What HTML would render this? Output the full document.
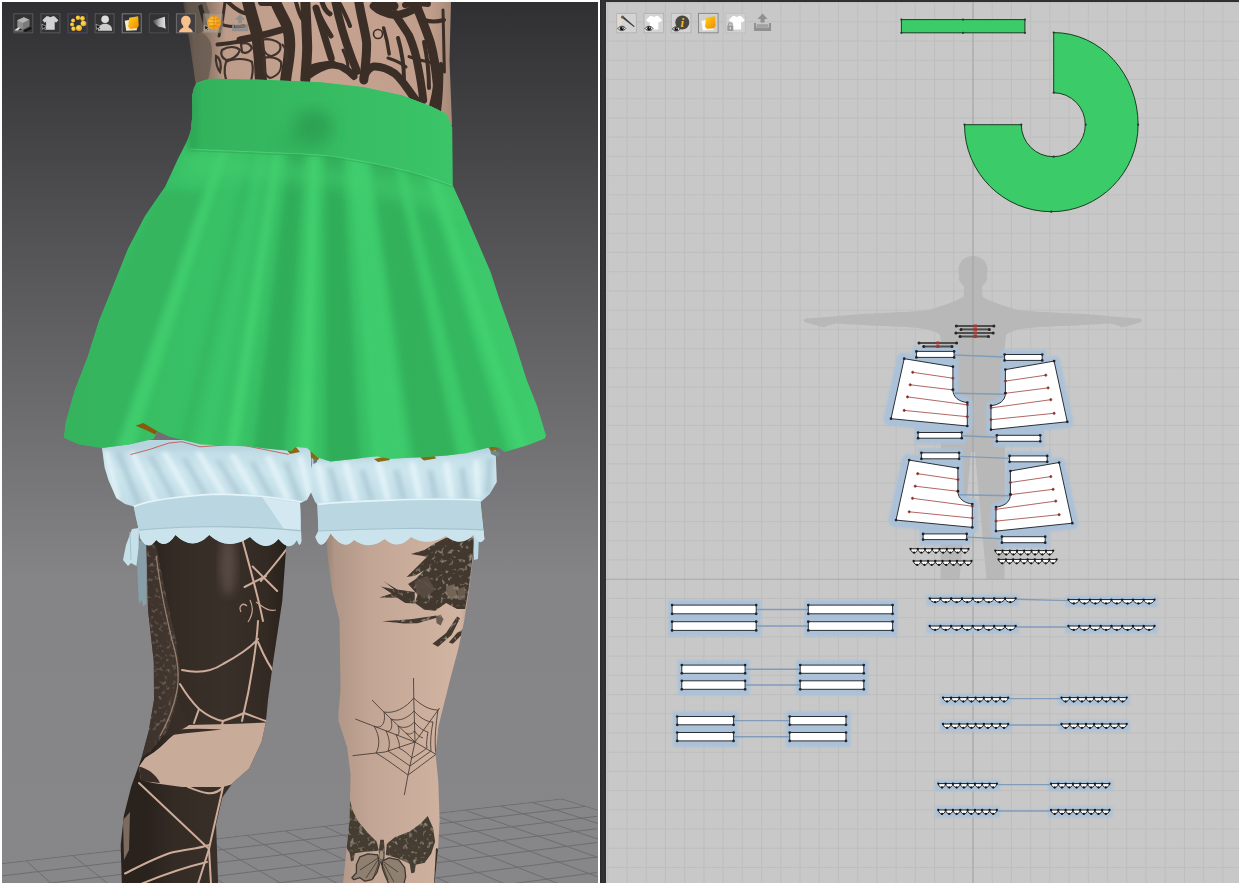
<!DOCTYPE html><html><head><meta charset="utf-8"><title>Garment</title>
<style>html,body{margin:0;padding:0;background:#fff;overflow:hidden}svg{display:block}text{font-family:"Liberation Serif",serif}</style></head><body>
<svg width="1239" height="883" viewBox="0 0 1239 883">
<defs><linearGradient id="bgL" x1="0" y1="2" x2="0" y2="883" gradientUnits="userSpaceOnUse"><stop offset="0" stop-color="#303032"/><stop offset="0.656" stop-color="#858587"/><stop offset="1" stop-color="#878789"/></linearGradient><clipPath id="clipL"><rect x="2" y="2" width="596" height="881"/></clipPath><clipPath id="clipF"><polygon points="2,863.1 561.6,798.4 598,809.7 598,883 2,883"/></clipPath><linearGradient id="torsoG" x1="183" y1="0" x2="452" y2="0" gradientUnits="userSpaceOnUse"><stop offset="0" stop-color="#4e443d"/><stop offset="0.07" stop-color="#7e6b5e"/><stop offset="0.16" stop-color="#bd9c8a"/><stop offset="0.5" stop-color="#c6a391"/><stop offset="0.92" stop-color="#c19e8c"/><stop offset="1" stop-color="#a58977"/></linearGradient><clipPath id="clipTorso"><path d="M183.3,2 L190,45 L196.6,90 L452,125 L449.5,60 L451,2 Z"/></clipPath><linearGradient id="dlegG" x1="146" y1="0" x2="288" y2="0" gradientUnits="userSpaceOnUse"><stop offset="0" stop-color="#2a221d"/><stop offset="0.2" stop-color="#342b25"/><stop offset="0.55" stop-color="#3a302a"/><stop offset="0.85" stop-color="#342a24"/><stop offset="1" stop-color="#27201b"/></linearGradient><clipPath id="clipDleg"><path d="M146,522 L148,610 L153.8,662 L154,700 L148.7,731 L141.5,758 L131.1,787 L123.8,816 L120.7,845 L121.8,884 L218.1,884 L217.1,853.4 L216.1,824.4 L222.3,797.4 L232.6,782.9 L249.2,768.4 L261.7,741.5 L265.8,722.8 L268,700 L273.1,662 L282.3,601 L288,522 Z"/></clipPath><linearGradient id="slegG" x1="326" y1="0" x2="474" y2="0" gradientUnits="userSpaceOnUse"><stop offset="0" stop-color="#9a8476"/><stop offset="0.06" stop-color="#b09687"/><stop offset="0.3" stop-color="#c2a594"/><stop offset="0.6" stop-color="#cbad9c"/><stop offset="0.9" stop-color="#d2b4a3"/><stop offset="1" stop-color="#b3998c"/></linearGradient><clipPath id="clipSleg"><path d="M325,522 L328,560 L332,590 L336,606 L339.5,620 L340.5,690 L338.5,712 L338.4,720.4 L347.2,747.6 L350.6,774.8 L349.5,820 L346.5,850 L343,884 L434.5,884 L438,850 L439.6,820 L438.3,781.6 L435.6,754.4 L438.3,727 L445,700 L451,676 L458,650 L464,622 L469,590 L474.5,545 L476,522 Z"/></clipPath><filter id="tex" x="0" y="0" width="100%" height="100%"><feTurbulence type="fractalNoise" baseFrequency="0.22" numOctaves="2" seed="3" result="n"/><feColorMatrix in="n" type="matrix" values="0 0 0 0 0.50  0 0 0 0 0.43  0 0 0 0 0.36  0 0 0 2.0 -1.15" result="nn"/><feComposite in="nn" in2="SourceGraphic" operator="in" result="m"/><feMerge><feMergeNode in="SourceGraphic"/><feMergeNode in="m"/></feMerge></filter><filter id="bl2" x="-10%" y="-10%" width="120%" height="120%"><feGaussianBlur stdDeviation="2.2"/></filter><filter id="bl1" x="-10%" y="-10%" width="120%" height="120%"><feGaussianBlur stdDeviation="1"/></filter><clipPath id="clipLB"><path d="M101,440 L102,448 L104.6,467.5 L108.4,480 L116.4,498.2 L125,504 L133.7,506.4 L136,518 L138.8,529.8 L140,538 Q148,552 156.2,540 Q165.4,550 175.5,535 Q192.9,552 209.2,535 Q228,552 250,537 Q266.3,554 278.5,539 Q289.5,553 297,540 Q299.5,549 301.5,541 L300,503 L307,500 L314.2,486 L311.2,465.6 L312,440 Z"/></clipPath><clipPath id="clipRB"><path d="M312.5,440 L312.2,463.5 L308,486 L315.3,502.3 L317.3,504.3 L318.4,530.8 L315.3,537 Q321,554 330.6,533.5 Q343.8,552 354,540 Q369.3,551 384.6,539 Q397.9,551 411.1,537 Q427,547 445.8,536 Q461,548 473.3,535 Q480,547 484.5,539 L483.9,534.5 L480.5,502.3 L489.6,494.1 L496.8,481.9 L495.8,455.4 L495,440 Z"/></clipPath><linearGradient id="puffG" x1="0" y1="440" x2="0" y2="510" gradientUnits="userSpaceOnUse"><stop offset="0" stop-color="#bcd8e3"/><stop offset="0.45" stop-color="#cde6ee"/><stop offset="1" stop-color="#c0dce6"/></linearGradient><clipPath id="clipSK"><path d="M190.8,130.7 L192.5,114 L192.3,95 L194,88 L196.6,83 L205,80 L213.6,78.7 L266.9,79.9 L320,82.3 L363.7,87.2 L402.4,95.6 L431.5,106.5 L446.4,114 L452.1,127.2 L452.5,185 L463.4,208.7 L477,240.4 L490.6,272.1 L499.7,300 L514,340 L526.7,380 L537,405.8 L546,435.5 L544.8,438.5 L530.4,444.2 L504.6,452 L499.4,447.5 L491.6,446.8 L465.8,453.3 L446.6,455.6 L420.8,457.2 L389.8,458.8 L376.9,456.2 L356.2,458.8 L330.4,461.4 L317.5,457.5 L307,447.7 L295.5,447 L291.7,451 L265.8,448.4 L250,446.5 L225,445.5 L200,444.2 L169,436.5 L157.5,431.3 L153.6,439.1 L130.4,444.2 L102,448 L78.7,444.2 L63.9,437.8 L65.8,422.3 L74.9,390 L87.5,357.4 L99,321 L113.5,285 L128,248.7 L145,216 L165,187 L177.2,160.6 L184,147 L188,138.8 Z"/></clipPath><filter id="bl5" x="-20%" y="-20%" width="140%" height="140%"><feGaussianBlur stdDeviation="5"/></filter><filter id="bl8" x="-20%" y="-20%" width="140%" height="140%"><feGaussianBlur stdDeviation="8"/></filter><linearGradient id="skG" x1="60" y1="0" x2="545" y2="0" gradientUnits="userSpaceOnUse"><stop offset="0" stop-color="#37bb62"/><stop offset="0.3" stop-color="#39c166"/><stop offset="0.7" stop-color="#39c166"/><stop offset="0.85" stop-color="#3cc86a"/><stop offset="1" stop-color="#3ecb6c"/></linearGradient><linearGradient id="wbG" x1="192" y1="0" x2="453" y2="0" gradientUnits="userSpaceOnUse"><stop offset="0" stop-color="#33b25c"/><stop offset="0.45" stop-color="#36ba61"/><stop offset="1" stop-color="#3bc468"/></linearGradient><filter id="bl3" x="-20%" y="-20%" width="140%" height="140%"><feGaussianBlur stdDeviation="3"/></filter><linearGradient id="orG" x1="0" y1="0" x2="1" y2="1"><stop offset="0" stop-color="#ffd21a"/><stop offset="1" stop-color="#f08a00"/></linearGradient><linearGradient id="gyG" x1="0" y1="0" x2="1" y2="0"><stop offset="0" stop-color="#3c3c3c"/><stop offset="0.6" stop-color="#bdbdbd"/><stop offset="1" stop-color="#e6e6e6"/></linearGradient><radialGradient id="ylG" cx="0.4" cy="0.4" r="0.7"><stop offset="0" stop-color="#ffe65a"/><stop offset="1" stop-color="#e89a10"/></radialGradient><linearGradient id="divg" x1="600" y1="0" x2="606" y2="0" gradientUnits="userSpaceOnUse"><stop offset="0" stop-color="#29292b"/><stop offset="0.5" stop-color="#343436"/><stop offset="1" stop-color="#2c2c2e"/></linearGradient><clipPath id="clipR"><rect x="606" y="2" width="633" height="881"/></clipPath><filter id="hb" x="-20%" y="-50%" width="140%" height="200%"><feGaussianBlur stdDeviation="1.1"/></filter></defs>
<rect x="0" y="0" width="1239" height="883" fill="#ffffff"/>
<rect x="2" y="2" width="596" height="881" fill="url(#bgL)"/>
<g clip-path="url(#clipF)" stroke="#6b6b6d" stroke-width="1" fill="none" opacity="0.9"><line x1="561.6" y1="798.9" x2="891.7" y2="900"/><line x1="531.9" y1="802.3" x2="836.6" y2="900"/><line x1="499.9" y1="806.0" x2="778.8" y2="900"/><line x1="465.0" y1="810.1" x2="717.4" y2="900"/><line x1="431.0" y1="814.0" x2="659.2" y2="900"/><line x1="395.0" y1="818.2" x2="599.2" y2="900"/><line x1="360.0" y1="822.2" x2="542.5" y2="900"/><line x1="324.0" y1="826.4" x2="485.7" y2="900"/><line x1="285.2" y1="830.9" x2="426.3" y2="900"/><line x1="246.5" y1="835.3" x2="368.6" y2="900"/><line x1="206.0" y1="840.0" x2="310.0" y2="900"/><line x1="163.0" y1="845.0" x2="249.7" y2="900"/><line x1="119.0" y1="850.1" x2="189.8" y2="900"/><line x1="72.6" y1="855.4" x2="128.6" y2="900"/><line x1="26.2" y1="860.8" x2="69.4" y2="900"/><line x1="-22.0" y1="866.4" x2="9.7" y2="900"/><line x1="-72.0" y1="872.2" x2="-50.1" y2="900"/><line x1="-124.0" y1="878.2" x2="-110.3" y2="900"/><line x1="-178.0" y1="884.4" x2="-170.7" y2="900"/><line x1="-235.0" y1="891.0" x2="-232.2" y2="900"/><line x1="-295.0" y1="897.9" x2="-294.7" y2="900"/><line x1="-360.0" y1="905.5" x2="-359.8" y2="900"/><line x1="-430.0" y1="913.5" x2="-427.2" y2="900"/><line x1="-505.0" y1="922.2" x2="-496.4" y2="900"/><line x1="2" y1="863.6" x2="597" y2="794.8"/><line x1="2" y1="875.9" x2="597" y2="805"/><line x1="2" y1="889" x2="597" y2="816.3"/><line x1="2" y1="903" x2="597" y2="828.7"/><line x1="2" y1="918" x2="597" y2="842.5"/><line x1="2" y1="934" x2="597" y2="857"/><line x1="2" y1="951" x2="597" y2="872.5"/><line x1="2" y1="969" x2="597" y2="889"/><line x1="2" y1="988" x2="597" y2="907"/></g>
<g clip-path="url(#clipL)"><path d="M183.3,2 L190,45 L196.6,90 L452,125 L449.5,60 L451,2 Z" fill="url(#torsoG)"/><g clip-path="url(#clipTorso)"><g stroke="#3a2e27" fill="none" stroke-linecap="round" stroke-linejoin="round"><path d="M247.7,0 C251,14 255,26 257.5,36 C259.5,52 260.5,66 261,82" stroke-width="12"/><path d="M217.5,44.5 C232,43 250,40 262,36" stroke-width="4"/><path d="M240,40 C255,37 268,34 281,30" stroke-width="7"/><path d="M275,0 C278,10 284,18 287,26 C291,38 290,48 289,56 C288,66 286,74 285.5,82" stroke-width="11"/><path d="M305.3,0 C306,20 307,36 307.2,48 C307,60 305.8,70 305.3,80" stroke-width="10"/><path d="M307,76 C315,70 322,66 332,64" stroke-width="8"/><path d="M317,10 C321,20 326,28 331,36" stroke-width="5"/><path d="M316,8 C321,24 326,42 331.2,58" stroke-width="7"/><path d="M335,0 C339,20 345,40 351,56 C353,62 355,66 356.7,71" stroke-width="8"/><path d="M358.5,0 C361,16 365,30 366.6,42 C367,56 365,68 363.8,80" stroke-width="9"/><path d="M310,68.5 C322,64 332,64 341,66.5 C346,69 350,72 354,76.5" stroke-width="7"/><path d="M363.8,77 C367,70 370,67 373.7,66.5 C381,66 388,69 395,73.6 C401,79 405,85 409,90.6 C412,95 415,99 418,103" stroke-width="8"/><path d="M373.7,6 C380,12 388,14 395,15 C403,15 411,11 417.5,7" stroke-width="8"/><path d="M376,4 L394,6" stroke-width="9"/><path d="M383.6,28 C386,36 388,45 389.2,54" stroke-width="3.5"/><path d="M395,14 C400,22 405,29 409,35.4 C413,45 416,54 417.5,63.7 C420,76 422,88 423.2,100" stroke-width="8"/><path d="M417.5,8.5 C422,20 427,32 430.3,42.5 C434,56 436,70 437.4,85 C437,93 435,100 433,108" stroke-width="9"/><path d="M443,10 L444.4,72" stroke-width="3"/><path d="M409,56.6 C418,60 428,62 437.4,63.7" stroke-width="3"/><path d="M424,20 C430,22 437,22 444,20" stroke-width="4"/><path d="M405,5 C412,3 420,3 428,4" stroke-width="6"/><path d="M340,4 C344,12 348,20 350,26" stroke-width="4"/><path d="M398,38 C402,52 404,64 404,80" stroke-width="4"/><path d="M388,58 C394,60 400,62 406,67" stroke-width="3"/><path d="M424,42 C427,56 429,70 429,88" stroke-width="4"/><path d="M441,64 C442,80 441,95 439,112" stroke-width="4"/><path d="M322,2 C324,8 326,12 330,14" stroke-width="5"/><path d="M296,2 C298,10 300,16 303,20" stroke-width="4"/><path d="M343,50 C346,56 348,62 348,68" stroke-width="3"/><path d="M262,2 L272,2" stroke-width="8"/><path d="M228,2 C236,10 244,14 250,14" stroke-width="4"/><path d="M214,20 C222,26 232,28 244,26" stroke-width="3"/><path d="M225,2 C224,12 222,24 219,36" stroke-width="3"/></g><g stroke="#3f332c" stroke-width="2.2" fill="none"><path d="M262,40 C268,38 276,40 280,44 C282,50 278,54 272,56 C266,56 262,50 262,40 Z"/><path d="M264,58 C270,56 278,58 281,62 C282,70 278,76 270,78 C265,76 263,68 264,58 Z"/><path d="M222,50 C228,46 236,46 240,50 C238,56 232,60 226,60 C222,58 220,54 222,50 Z"/><path d="M241,44 C246,42 250,44 252,48 C250,52 246,54 242,52 Z"/><path d="M226,62 C234,58 246,58 252,62 C254,70 252,78 250,84 L228,84 C224,76 224,68 226,62 Z"/><path d="M216,56 C220,58 222,64 220,72 C218,70 215,62 216,56 Z"/><path d="M282,44 C286,48 288,56 286,62"/></g><circle cx="378" cy="34" r="4.5" fill="#c6a391" stroke="#3a2e27" stroke-width="1.6"/><path d="M192,32 C200,30 210,36 211.5,46 C213,58 210,72 207,84 L196,84 Z" fill="#6a5d52" opacity="0.85"/><path d="M186,2 L206,2 L210,14 L206,30 L196,34 L190,30 Z" fill="#5f544b" opacity="0.8"/><path d="M198,6 L202,4 L208,26 L204,28 Z" fill="#2e2a28"/></g><path d="M146,522 L148,610 L153.8,662 L154,700 L148.7,731 L141.5,758 L131.1,787 L123.8,816 L120.7,845 L121.8,884 L218.1,884 L217.1,853.4 L216.1,824.4 L222.3,797.4 L232.6,782.9 L249.2,768.4 L261.7,741.5 L265.8,722.8 L268,700 L273.1,662 L282.3,601 L288,522 Z" fill="url(#dlegG)"/><g clip-path="url(#clipDleg)"><path d="M267,722.5 L230,724 L188,725 C178,730 170,738 165.8,742 C158,750 150,755 145,758 L139,766.6 L141,780 L153,783 L182,787 L223,787 L240,782 L252,768 L263,742 Z" fill="#c9ab9a"/><path d="M174,692 C180,704 186,716 188.5,725.5 C180,731 170,736 161,732 C166,722 170,708 174,692 Z" fill="#382d27"/><path d="M161.6,732 C180,728 200,728.5 222,729.5 C204,731.5 182,733 163,736.5 Z" fill="#382d27"/><path d="M139,766.6 C146,768 156,774 160,783 L141,781 Z" fill="#382d27"/><path d="M146,540 L156,545 L167,600 L176,640 L180,670 L177,700 L168,730 L150,752 L138,760 L140,700 L140,600 Z" fill="#4d4138" filter="url(#tex)" opacity="0.6"/><path d="M156.3,556 C160,590 166,615 172,640 C178,660 180,676 176.7,692 C174,706 168,722 160,736" stroke="#a58b79" stroke-width="1.3" fill="none" opacity="0.85"/><ellipse cx="228" cy="566" rx="8" ry="30" fill="#5b4e46" filter="url(#bl5)" opacity="0.9"/><g stroke="#cdac99" stroke-width="2" fill="none" stroke-linecap="round" stroke-linejoin="round"><path d="M182,670 C200,674 214,670 223,664 C238,656 250,648 258,639"/><path d="M258,621 C257,640 252,680 242,721"/><path d="M258,642 C264,656 270,668 277,676"/><path d="M180,684 C186,694 192,702 199,709 C208,716 216,720 223,721 C232,718 238,716 244,713 C252,716 260,719 266,721"/><path d="M199,709 L194,723"/><path d="M223,721 L222,725"/><path d="M242.5,540 C250,568 258,596 263,621"/><path d="M289,546 C280,558 270,570 260.9,581"/><path d="M252.7,566.5 L277.2,591"/><path d="M244.6,587 L266,576"/><path d="M139,783 L209,849"/><path d="M223,787 C218,810 213,830 209,849"/><path d="M188,787 C200,792 214,798 223,787"/><path d="M125,873.5 C140,866 155,858 170,853 C185,849 198,849 209,845"/><path d="M141,884 C165,874 190,866 207,862"/><path d="M209,849 L211,884"/><path d="M209,849 L198,884"/></g><g stroke="#c4a491" stroke-width="1.2" fill="none"><path d="M241,612 C238,606 243,602 247,606 M250,600 C254,608 252,616 248,622 M256,602 C262,606 268,612 276,610"/></g><path d="M123,820 L130,812 L129,850 L124,860 Z" fill="#7b6a5d"/></g><path d="M325,522 L328,560 L332,590 L336,606 L339.5,620 L340.5,690 L338.5,712 L338.4,720.4 L347.2,747.6 L350.6,774.8 L349.5,820 L346.5,850 L343,884 L434.5,884 L438,850 L439.6,820 L438.3,781.6 L435.6,754.4 L438.3,727 L445,700 L451,676 L458,650 L464,622 L469,590 L474.5,545 L476,522 Z" fill="url(#slegG)"/><g clip-path="url(#clipSleg)"><g filter="url(#tex)" fill="#43382f"><path d="M435.2,543.2 L446.1,537.7 L474.6,537.7 L471.9,562.2 L468.5,589.4 L465.1,609.1 L457.0,609.1 L446.1,603.0 L435.2,610.8 L424.4,609.7 L414.8,603.0 L417.6,594.8 L408.1,583.9 L414.8,579.8 L424.4,570.3 L414.8,575.8 L406.7,577.1 L417.6,566.3 L427.1,556.7 L410.8,554.0 L424.4,549.9 Z"/><path d="M414.8,592.1 L397.2,589.4 L383.6,581.2 L394.5,589.4 L380.9,586.6 L391.7,593.4 L379.5,597.5 L397.2,597.8 L405.3,603.0 L414.8,603.6 Z"/><path d="M382.2,621.3 L410.8,619.3 L436.6,615.5 L435.9,617.9 L417.6,623.3 L404.0,623.6 Z"/><path d="M435.9,616.5 L440.7,614.5 L443.4,619.3 L440.7,625.4 L436.6,623.3 Z" opacity="0.7"/><path d="M432.5,643.7 L446.1,632.9 L457.0,616.5 L460.0,618.2 L451.5,634.9 L438.0,646.7 Z"/><path d="M448.8,642.4 L457.0,632.9 L463.8,628.8 L461.1,635.6 L452.9,643.7 Z"/></g><path d="M446.1,586.6 L454.3,583.9 L457.0,594.8 L451.5,600.2 L446.1,594.8 Z" fill="#8a7868" opacity="0.7"/><path d="M457.0,589.4 L465.1,586.6 L465.1,598.9 L458.3,600.2 Z" fill="#7a6a5c" opacity="0.7"/><path d="M414.8,581.2 L427.1,575.8 L435.2,589.4 L424.4,598.9 L416.2,592.1 Z" fill="#5d5045" opacity="0.8"/><g stroke="#4b3f38" stroke-width="0.9" fill="none"><path d="M415,742 L379.8,708 L372,700"/><path d="M415,742 L413.8,700 L413.5,678"/><path d="M415,742 L439.6,708"/><path d="M415,742 L436,754.4"/><path d="M415,742 L408,775 L404.3,795"/><path d="M415,742 L385,752 L352.6,755.7"/><path d="M415,742 L355.3,719"/><path d="M384,712 C394,714 406,708 413.7,698 C422,706 430,710 438,710"/><path d="M391,719 C399,722 408,718 414,711 C420,718 427,722 433,722"/><path d="M398,726 C404,729 410,727 414.3,722 C419,728 424,731 428,732"/><path d="M406,733 C409,735 412,734 414.6,731 C417,735 420,737 423,738"/><path d="M384,712 C386,722 382,730 374,726"/><path d="M374,726 C380,736 380,746 376,753"/><path d="M376,753 C388,760 398,768 408,775"/><path d="M391,719 C393,727 391,733 386,731"/><path d="M386,731 C390,739 390,746 388,751"/><path d="M388,751 C396,756 404,762 410,766"/><path d="M398,726 C400,732 399,736 396,735 C399,741 400,745 399,748 C405,751 409,755 412,758"/><path d="M438,710 C436,724 434,740 436,754.4 C428,760 418,768 408,775"/><path d="M433,722 C431,732 430,742 431,751 C424,756 417,761 410,766"/><path d="M428,732 C427,738 426,744 427,748 C422,752 417,755 412,758"/></g><g filter="url(#tex)" fill="#453d33"><path d="M349.9,800.0 L352.4,809.9 L357.9,820.9 L367.9,832.9 L376.8,841.8 L378.8,850.8 L364.9,851.8 L354.9,853.3 L353.4,860.8 L350.9,861.3 L349.9,853.8 L346.0,846.8 L344.5,834.9 L346.0,819.9 L348.0,807.0 Z"/><path d="M427.7,815.9 L433.1,827.9 L435.1,841.8 L431.2,853.8 L424.7,862.8 L415.7,864.7 L414.7,872.7 L411.2,873.2 L409.7,863.8 L398.8,858.8 L385.8,854.8 L386.8,843.8 L394.8,837.3 L409.7,831.4 L420.7,823.4 Z"/><path d="M380.3,839.8 L383.8,839.8 L384.8,850.8 L384.3,860.8 L381.8,866.7 L379.3,860.8 L378.8,850.8 Z"/></g><g fill="#8f7f70" stroke="#40382f" stroke-width="1.3" stroke-linejoin="round"><path d="M377.8,854.8 L367.9,853.8 L359.9,856.8 L356.4,864.7 L356.4,872.7 L351.9,877.7 L353.9,879.7 L359.9,877.7 L364.9,881.2 L371.9,879.7 L376.8,872.7 L379.3,864.7 Z"/><path d="M382.8,860.8 L388.8,857.8 L398.8,859.8 L404.7,867.7 L405.7,876.7 L403.8,884 L388.8,884 L384.8,874.7 L382.3,867.7 Z"/></g><g stroke="#40382f" stroke-width="0.8" fill="none"><path d="M378,858 L360,870 M378,860 L366,878 M379,862 L373,879 M384,862 L398,872 M384,864 L394,882 M383,866 L388,880"/></g><ellipse cx="381.5" cy="855" rx="2" ry="4.5" fill="#a3917f"/><path d="M436,848 L440,850 L438,884 L434,884 Z" fill="#3b332b"/></g><path d="M137,541 L146,541 L146.5,604 L143,606 L141.5,600 L139,604 L137.5,575 Z" fill="#879fa9"/><path d="M132,529 L139,528 L138.5,548 L136.5,566 L131,563 L128,566 L123,560 L126,545 Z" fill="#c6e0ea"/><path d="M130,532 L131,560" stroke="#a5c3cf" stroke-width="1" fill="none"/><path d="M473.5,536 L479,536 L478,559 L474,560 Z" fill="#bedae5"/><path d="M101,440 L102,448 L104.6,467.5 L108.4,480 L116.4,498.2 L125,504 L133.7,506.4 L136,518 L138.8,529.8 L140,538 Q148,552 156.2,540 Q165.4,550 175.5,535 Q192.9,552 209.2,535 Q228,552 250,537 Q266.3,554 278.5,539 Q289.5,553 297,540 Q299.5,549 301.5,541 L300,503 L307,500 L314.2,486 L311.2,465.6 L312,440 Z" fill="url(#puffG)"/><path d="M312.5,440 L312.2,463.5 L308,486 L315.3,502.3 L317.3,504.3 L318.4,530.8 L315.3,537 Q321,554 330.6,533.5 Q343.8,552 354,540 Q369.3,551 384.6,539 Q397.9,551 411.1,537 Q427,547 445.8,536 Q461,548 473.3,535 Q480,547 484.5,539 L483.9,534.5 L480.5,502.3 L489.6,494.1 L496.8,481.9 L495.8,455.4 L495,440 Z" fill="url(#puffG)"/><g clip-path="url(#clipLB)"><g filter="url(#bl2)" opacity="0.75"><path d="M114.5,452 L136.5,506 L143.5,506 L121.5,452 Z" fill="#a9c6d2"/><path d="M129.0,452 L153.0,503 L159.0,503 L135.0,452 Z" fill="#eaf7fb"/><path d="M147.0,455 L171.0,499 L177.0,499 L153.0,455 Z" fill="#a9c6d2"/><path d="M160.5,452 L186.5,497 L193.5,497 L167.5,452 Z" fill="#eaf7fb"/><path d="M181.0,458 L203.0,496 L209.0,496 L187.0,458 Z" fill="#a9c6d2"/><path d="M194.5,452 L220.5,495 L227.5,495 L201.5,452 Z" fill="#eaf7fb"/><path d="M215.0,460 L237.0,496 L243.0,496 L221.0,460 Z" fill="#a9c6d2"/><path d="M228.5,454 L252.5,496 L259.5,496 L235.5,454 Z" fill="#eaf7fb"/><path d="M249.0,462 L269.0,498 L275.0,498 L255.0,462 Z" fill="#a9c6d2"/><path d="M264.5,456 L284.5,500 L291.5,500 L271.5,456 Z" fill="#eaf7fb"/><path d="M283.0,462 L297.0,502 L303.0,502 L289.0,462 Z" fill="#a9c6d2"/><path d="M297.0,456 L307.0,498 L313.0,498 L303.0,456 Z" fill="#eaf7fb"/><path d="M103.5,450 L115.5,500 L120.5,500 L108.5,450 Z" fill="#eaf7fb"/><path d="M100,440 L320,440 L320,449 L100,451 Z" fill="#b5d2dd"/></g><path d="M133.7,506.4 C150,500 176.6,496.2 217.3,494.1 C258,495 280,498 307,503 L301,531 C280,528 258,527.5 217,526.5 C180,527 160,528 138.8,530.5 Z" fill="#bad6e1"/><path d="M262,497 L301,503 L300,530 L284,529 Z" fill="#d3e8f0"/><path d="M133.7,506.4 C150,500 176.6,496.2 217.3,494.1 C258,495 280,498 307,503" stroke="#e4f3f8" stroke-width="1.6" fill="none"/><path d="M138.8,530.5 L140,538 Q148,552 156.2,540 Q165.4,550 175.5,535 Q192.9,552 209.2,535 Q228,552 250,537 Q266.3,554 278.5,539 Q289.5,553 297,540 Q299.5,549 301.5,541  L301,531 C280,528.5 258,528 217,527 C180,527.5 160,528.5 138.8,530.5 Z" fill="#cbe3ec"/><path d="M138.8,530.2 C160,528 180,527 217,526.5 C258,527.5 280,528 301,531" stroke="#a3c2ce" stroke-width="1.2" fill="none"/><path d="M130.4,454.6 L149.8,449.4 L169,443 L182,441.7 L200,446.8 L237.7,444.2 L288.7,454.4" stroke="#c24a44" stroke-width="0.8" fill="none"/></g><g clip-path="url(#clipRB)"><g filter="url(#bl2)" opacity="0.75"><path d="M315.0,464 L323.0,503 L329.0,503 L321.0,464 Z" fill="#eaf7fb"/><path d="M327.0,468 L337.0,503 L343.0,503 L333.0,468 Z" fill="#a9c6d2"/><path d="M341.5,462 L352.5,502 L359.5,502 L348.5,462 Z" fill="#eaf7fb"/><path d="M359.0,470 L369.0,501 L375.0,501 L365.0,470 Z" fill="#a9c6d2"/><path d="M374.5,462 L384.5,500 L391.5,500 L381.5,462 Z" fill="#eaf7fb"/><path d="M393.0,470 L401.0,500 L407.0,500 L399.0,470 Z" fill="#a9c6d2"/><path d="M408.5,462 L416.5,499 L423.5,499 L415.5,462 Z" fill="#eaf7fb"/><path d="M427.0,470 L433.0,499 L439.0,499 L433.0,470 Z" fill="#a9c6d2"/><path d="M442.5,462 L448.5,499 L455.5,499 L449.5,462 Z" fill="#eaf7fb"/><path d="M459.0,468 L463.0,499 L469.0,499 L465.0,468 Z" fill="#a9c6d2"/><path d="M473.0,460 L475.0,498 L481.0,498 L479.0,460 Z" fill="#eaf7fb"/><path d="M487.0,458 L485.0,494 L491.0,494 L493.0,458 Z" fill="#a9c6d2"/><path d="M308,440 L500,440 L500,452 L308,462 Z" fill="#b0cfda"/></g><path d="M317.3,504.3 C340,502 361.2,501.3 400,499.8 C437,499 460,499 480.5,500.3 L484,535 C460,529.5 437,528 400,528.5 C367,529 340,530 318.4,531 Z" fill="#bad6e1"/><path d="M317.3,504.3 C340,502 361.2,501.3 400,499.8 C437,499 460,499 480.5,500.3" stroke="#e4f3f8" stroke-width="1.6" fill="none"/><path d="M318.4,531 L315.3,537 Q321,554 330.6,533.5 Q343.8,552 354,540 Q369.3,551 384.6,539 Q397.9,551 411.1,537 Q427,547 445.8,536 Q461,548 473.3,535 Q480,547 484.5,539  L483.9,530 C460,529 437,528 400,528.5 C367,529 340,530 318.4,531 Z" fill="#cbe3ec"/><path d="M318.4,531 C340,530 367,529 400,528.5 C437,528 460,529 483.9,530" stroke="#a3c2ce" stroke-width="1.2" fill="none"/></g><path d="M313,452 L318,453 L317,462 L313.5,464 Z" fill="#65787f"/><path d="M490,449 L500,453 L498,457 L491,454 Z" fill="#6f848d"/><path d="M286,449 L296,447 L300,452 L290,454 Z" fill="#8a6a10"/><path d="M310,446 L322,453 L318,460 L311,458 Z" fill="#8a6a10"/><path d="M374,459 L388,456 L390,460 L378,462 Z" fill="#8a6a10"/><path d="M420,457.5 L434,455 L436,458.5 L424,460.5 Z" fill="#8a6a10"/><path d="M488,447 L497,445 L498,450 L491,451 Z" fill="#8a6a10"/><path d="M190.8,130.7 L192.5,114 L192.3,95 L194,88 L196.6,83 L205,80 L213.6,78.7 L266.9,79.9 L320,82.3 L363.7,87.2 L402.4,95.6 L431.5,106.5 L446.4,114 L452.1,127.2 L452.5,185 L463.4,208.7 L477,240.4 L490.6,272.1 L499.7,300 L514,340 L526.7,380 L537,405.8 L546,435.5 L544.8,438.5 L530.4,444.2 L504.6,452 L499.4,447.5 L491.6,446.8 L465.8,453.3 L446.6,455.6 L420.8,457.2 L389.8,458.8 L376.9,456.2 L356.2,458.8 L330.4,461.4 L317.5,457.5 L307,447.7 L295.5,447 L291.7,451 L265.8,448.4 L250,446.5 L225,445.5 L200,444.2 L169,436.5 L157.5,431.3 L153.6,439.1 L130.4,444.2 L102,448 L78.7,444.2 L63.9,437.8 L65.8,422.3 L74.9,390 L87.5,357.4 L99,321 L113.5,285 L128,248.7 L145,216 L165,187 L177.2,160.6 L184,147 L188,138.8 Z" fill="url(#skG)"/><g clip-path="url(#clipSK)"><g filter="url(#bl3)" opacity="0.78"><path d="M159.4,190 L23.7,475 L109.5,475 L206.4,190 Z" fill="#35b35d" opacity="1"/><path d="M219.0,150 L107.4,475 L125.4,475 L227.8,150 Z" fill="#42d070" opacity="1"/><path d="M250.3,150 L171.7,475 L182.7,475 L255.6,150 Z" fill="#33b35c" opacity="0.8"/><path d="M260.3,150 L192.4,475 L206.3,475 L267.1,150 Z" fill="#3cc86a" opacity="0.8"/><path d="M274.8,150 L222.2,475 L234.6,475 L280.8,150 Z" fill="#44d472" opacity="1"/><path d="M288.6,150 L250.5,475 L283.7,475 L304.7,150 Z" fill="#2fa856" opacity="1"/><path d="M311.1,150 L296.8,475 L312.1,475 L318.5,150 Z" fill="#44d472" opacity="1"/><path d="M324.8,150 L325.2,475 L361.1,475 L342.3,150 Z" fill="#2fa856" opacity="1"/><path d="M348.3,150 L373.6,475 L409.6,475 L365.8,150 Z" fill="#41cf6f" opacity="1"/><path d="M369.2,150 L416.5,475 L460.7,475 L390.7,150 Z" fill="#31ac59" opacity="1"/><path d="M394.0,150 L467.6,475 L478.7,475 L399.4,150 Z" fill="#3dca6b" opacity="1"/><path d="M400.7,150 L481.5,475 L514.7,475 L416.9,150 Z" fill="#33b25b" opacity="1"/><path d="M421.9,150 L525.0,475 L537.5,475 L428.0,150 Z" fill="#44d472" opacity="1"/></g><g filter="url(#bl8)"><path d="M192,150 L452,185 L460,215 L400,200 L330,185 L250,178 L180,180 Z" fill="#41cf6f" opacity="0.55"/></g><path d="M185,70 L460,70 L460,188 L452.5,185.5 C430,177 410,171 390,167 C360,160 340,157 320,155 C290,153 250,152 191,149 Z" fill="url(#wbG)"/><g filter="url(#bl8)"><ellipse cx="313" cy="127" rx="20" ry="17" fill="#2c9f51" opacity="0.95"/><ellipse cx="303" cy="142" rx="28" ry="9" fill="#2fa856" opacity="0.6"/></g><path d="M188,84 L198,84 L197,150 L186,150 Z" fill="#2fa555" filter="url(#bl3)" opacity="0.8"/><path d="M191,149 C250,152 290,153 320,155 C340,157 360,160 390,167 C410,171 430,177 452.5,185.5" stroke="#5fdc88" stroke-width="1" fill="none" opacity="0.5"/><path d="M191,150.6 C250,153.5 290,154.5 320,156.5 C340,158.5 360,161.5 390,168.5 C410,172.5 430,178.5 452.5,187" stroke="#2fa856" stroke-width="1.2" fill="none" opacity="0.6"/></g><path d="M135.6,425.8 L143.3,422.9 L157.5,431.3 L155,434.5 L146,430 Z" fill="#8a5a0c"/></g>
<g clip-path="url(#clipL)"><rect x="13.8" y="13.8" width="19" height="19" fill="none" stroke="#58585a" stroke-width="1" opacity="1"/><g transform="translate(13.3,13.3)"><path d="M4,7 L10.5,4 L16,6.5 L16,13 L9.5,16.5 L4,13.5 Z" fill="#8f8f8f"/><path d="M4,7 L10.5,4 L16,6.5 L9.5,9.8 Z" fill="#b4b4b4"/><path d="M9.5,9.8 L16,6.5 L16,13 L9.5,16.5 Z" fill="#7a7a7a"/><path d="M10,17.5 L17.5,14 L18.5,15.5 L12,18.5 Z" fill="#111"/><path d="M1,17 L5,14 L7,14.5 L4,18 Z" fill="#ddd"/><path d="M1,18.5 L10,18.5 L10,16.5 L1,17.5 Z" fill="#6c6c6c"/></g><rect x="40.9" y="13.8" width="19" height="19" fill="none" stroke="#58585a" stroke-width="1" opacity="1"/><path transform="translate(40.400000000000006,13.8) scale(1.0)" d="M6,2.5 L8,2.5 C8.6,3.6 11.4,3.6 12,2.5 L14,2.5 L18,6.5 L15.6,9 L14.3,7.8 L14.3,16 L5.7,16 L5.7,7.8 L4.4,9 L2,6.5 Z" fill="#d2d2d2"/><path d="M41.900000000000006,24.3 l5,2.2 l-2.2,0.6 l1.6,2 l-1,0.7 l-1.5,-2 l-1.4,1.6 Z" fill="#111" stroke="#eee" stroke-width="0.5"/><rect x="68.0" y="13.8" width="19" height="19" fill="none" stroke="#4a4a66" stroke-width="1" opacity="1"/><g><circle cx="78.0" cy="17.8" r="2.2" fill="url(#ylG)"/><circle cx="82.5" cy="18.5" r="2.4" fill="url(#ylG)"/><circle cx="83.5" cy="23.5" r="2.8" fill="url(#ylG)"/><circle cx="79.0" cy="28.1" r="3" fill="url(#ylG)"/><circle cx="73.5" cy="28.8" r="2.2" fill="url(#ylG)"/><circle cx="72.1" cy="24.5" r="2" fill="url(#ylG)"/><circle cx="73.1" cy="20.5" r="2" fill="url(#ylG)"/></g><rect x="95.1" y="13.8" width="19" height="19" fill="none" stroke="#58585a" stroke-width="1" opacity="1"/><g transform="translate(94.60000000000001,13.3)"><circle cx="10.5" cy="6" r="3.8" fill="#dedede"/><path d="M3.5,17.5 C3.5,12.5 6.5,10.5 10.5,10.5 C14.5,10.5 17.5,12.5 17.5,17.5 Z" fill="#cccccc"/></g><path d="M96.10000000000001,24.3 l5,2.2 l-2.2,0.6 l1.6,2 l-1,0.7 l-1.5,-2 l-1.4,1.6 Z" fill="#111" stroke="#eee" stroke-width="0.5"/><rect x="122.2" y="13.8" width="19" height="19" fill="none" stroke="#7b7b80" stroke-width="1" opacity="1"/><g transform="translate(121.7,13.3)"><path d="M3,7.5 L8,6.5 L9,15 L15.5,14.5 L15,17 L4.5,17.5 Z" fill="#f5e9cf"/><path d="M7.5,4.5 L16.5,3 L17,12.5 L15.5,15 L8,15.5 L6.5,13 Z" fill="url(#orG)"/></g><rect x="149.3" y="13.8" width="19" height="19" fill="none" stroke="#4c4c4e" stroke-width="1" opacity="1"/><g transform="translate(148.8,13.3)"><path d="M3.5,7.5 C8,6.5 13,4 16,3.5 C16.5,7 16,12 17,15.5 C14,13.5 11,14.5 9,13 C7,11.5 5,9.5 3.5,7.5 Z" fill="url(#gyG)"/></g><rect x="176.4" y="13.8" width="19" height="19" fill="#3f3f41" stroke="#6e6e70" stroke-width="1" opacity="1"/><g transform="translate(175.90000000000003,13.3)"><path d="M10,2.5 C13,2.5 14.8,4.8 14.8,7.5 C14.8,10 13.6,11.8 12.6,12.6 L12.8,14.5 C14.5,15.3 16.5,16 17,19 L3,19 C3.5,16 5.5,15.3 7.2,14.5 L7.4,12.6 C6.4,11.8 5.2,10 5.2,7.5 C5.2,4.8 7,2.5 10,2.5 Z" fill="#f7c08c"/></g><rect x="203.5" y="13.8" width="19" height="19" fill="#b9a692" stroke="#9a9080" stroke-width="1" opacity="0.55"/><g transform="translate(203.00000000000003,13.3)"><circle cx="11" cy="9.5" r="7" fill="#f2a01e"/><circle cx="9.5" cy="8" r="4" fill="#ffc63a" opacity="0.8"/><path d="M4.5,9.5 H17.5 M11,2.5 V16.5 M6,5 C9,7 13,7 16,5 M6,14 C9,12 13,12 16,14" stroke="#c87810" stroke-width="0.6" fill="none"/></g><path d="M204.50000000000003,25.3 l5,2.2 l-2.2,0.6 l1.6,2 l-1,0.7 l-1.5,-2 l-1.4,1.6 Z" fill="#111" stroke="#eee" stroke-width="0.5"/><g transform="translate(230.10000000000002,13.3)" fill="#8c8c8e" opacity="0.9"><path d="M10,1 L15,6.5 L12,6.5 L12,10 L8,10 L8,6.5 L5,6.5 Z"/><path d="M2,10.5 L4,10.5 L4,15 L16,15 L16,10.5 L18,10.5 L18,18 L2,18 Z"/><rect x="4.5" y="11.5" width="11" height="3" fill="#7a7a7c"/></g></g>
<rect x="600" y="0" width="639" height="2" fill="#303032"/>
<rect x="600" y="0" width="6" height="883" fill="url(#divg)"/>
<rect x="606" y="2" width="633" height="881" fill="#c8c8c8"/>
<g stroke="#bebebe" stroke-width="1" clip-path="url(#clipR)"><line x1="607.82" y1="2" x2="607.82" y2="883"/><line x1="627.04" y1="2" x2="627.04" y2="883"/><line x1="646.26" y1="2" x2="646.26" y2="883"/><line x1="665.48" y1="2" x2="665.48" y2="883"/><line x1="684.70" y1="2" x2="684.70" y2="883"/><line x1="703.92" y1="2" x2="703.92" y2="883"/><line x1="723.14" y1="2" x2="723.14" y2="883"/><line x1="742.36" y1="2" x2="742.36" y2="883"/><line x1="761.58" y1="2" x2="761.58" y2="883"/><line x1="780.80" y1="2" x2="780.80" y2="883"/><line x1="800.02" y1="2" x2="800.02" y2="883"/><line x1="819.24" y1="2" x2="819.24" y2="883"/><line x1="838.46" y1="2" x2="838.46" y2="883"/><line x1="857.68" y1="2" x2="857.68" y2="883"/><line x1="876.90" y1="2" x2="876.90" y2="883"/><line x1="896.12" y1="2" x2="896.12" y2="883"/><line x1="915.34" y1="2" x2="915.34" y2="883"/><line x1="934.56" y1="2" x2="934.56" y2="883"/><line x1="953.78" y1="2" x2="953.78" y2="883"/><line x1="992.22" y1="2" x2="992.22" y2="883"/><line x1="1011.44" y1="2" x2="1011.44" y2="883"/><line x1="1030.66" y1="2" x2="1030.66" y2="883"/><line x1="1049.88" y1="2" x2="1049.88" y2="883"/><line x1="1069.10" y1="2" x2="1069.10" y2="883"/><line x1="1088.32" y1="2" x2="1088.32" y2="883"/><line x1="1107.54" y1="2" x2="1107.54" y2="883"/><line x1="1126.76" y1="2" x2="1126.76" y2="883"/><line x1="1145.98" y1="2" x2="1145.98" y2="883"/><line x1="1165.20" y1="2" x2="1165.20" y2="883"/><line x1="1184.42" y1="2" x2="1184.42" y2="883"/><line x1="1203.64" y1="2" x2="1203.64" y2="883"/><line x1="1222.86" y1="2" x2="1222.86" y2="883"/><line x1="606" y1="2.60" x2="1239" y2="2.60"/><line x1="606" y1="21.82" x2="1239" y2="21.82"/><line x1="606" y1="41.04" x2="1239" y2="41.04"/><line x1="606" y1="60.26" x2="1239" y2="60.26"/><line x1="606" y1="79.48" x2="1239" y2="79.48"/><line x1="606" y1="98.70" x2="1239" y2="98.70"/><line x1="606" y1="117.92" x2="1239" y2="117.92"/><line x1="606" y1="137.14" x2="1239" y2="137.14"/><line x1="606" y1="156.36" x2="1239" y2="156.36"/><line x1="606" y1="175.58" x2="1239" y2="175.58"/><line x1="606" y1="194.80" x2="1239" y2="194.80"/><line x1="606" y1="214.02" x2="1239" y2="214.02"/><line x1="606" y1="233.24" x2="1239" y2="233.24"/><line x1="606" y1="252.46" x2="1239" y2="252.46"/><line x1="606" y1="271.68" x2="1239" y2="271.68"/><line x1="606" y1="290.90" x2="1239" y2="290.90"/><line x1="606" y1="310.12" x2="1239" y2="310.12"/><line x1="606" y1="329.34" x2="1239" y2="329.34"/><line x1="606" y1="348.56" x2="1239" y2="348.56"/><line x1="606" y1="367.78" x2="1239" y2="367.78"/><line x1="606" y1="387.00" x2="1239" y2="387.00"/><line x1="606" y1="406.22" x2="1239" y2="406.22"/><line x1="606" y1="425.44" x2="1239" y2="425.44"/><line x1="606" y1="444.66" x2="1239" y2="444.66"/><line x1="606" y1="463.88" x2="1239" y2="463.88"/><line x1="606" y1="483.10" x2="1239" y2="483.10"/><line x1="606" y1="502.32" x2="1239" y2="502.32"/><line x1="606" y1="521.54" x2="1239" y2="521.54"/><line x1="606" y1="540.76" x2="1239" y2="540.76"/><line x1="606" y1="559.98" x2="1239" y2="559.98"/><line x1="606" y1="598.42" x2="1239" y2="598.42"/><line x1="606" y1="617.64" x2="1239" y2="617.64"/><line x1="606" y1="636.86" x2="1239" y2="636.86"/><line x1="606" y1="656.08" x2="1239" y2="656.08"/><line x1="606" y1="675.30" x2="1239" y2="675.30"/><line x1="606" y1="694.52" x2="1239" y2="694.52"/><line x1="606" y1="713.74" x2="1239" y2="713.74"/><line x1="606" y1="732.96" x2="1239" y2="732.96"/><line x1="606" y1="752.18" x2="1239" y2="752.18"/><line x1="606" y1="771.40" x2="1239" y2="771.40"/><line x1="606" y1="790.62" x2="1239" y2="790.62"/><line x1="606" y1="809.84" x2="1239" y2="809.84"/><line x1="606" y1="829.06" x2="1239" y2="829.06"/><line x1="606" y1="848.28" x2="1239" y2="848.28"/><line x1="606" y1="867.50" x2="1239" y2="867.50"/></g>
<path d="M973,256 C981.5,256 987.5,262 987.5,270 C987.5,273 987,275 986.5,276.5 C987.5,277 987.5,280 986,281.5 C985,283.5 983.5,285 982,286 L982.5,297 C990,301 1003,306 1018,310 C1040,313 1080,312.5 1112,316.5 L1140,318.5 C1143,319.5 1143,321.5 1140,322.5 L1122,327.5 L1118,325.5 L1110,323.5 C1080,325.5 1050,326.5 1034,327.5 C1020,328.5 1010,331 1006,335 L1004,356 C1003,375 1000,390 1001,405 C1002,420 1005,432 1005,445 L1005,520 L1004.5,579 L986.5,579 L981,520 L975,452 L971,452 L965,520 L959.5,579 L940.5,579 L941,520 L941,445 C941,432 944,420 945,405 C946,390 943,375 942,356 L940,335 C936,331 926,328.5 912,327.5 C896,326.5 866,325.5 836,323.5 L828,325.5 L824,327.5 L806,322.5 C803,321.5 803,319.5 806,318.5 L834,316.5 C866,312.5 906,313 928,310 C943,306 956,301 963.5,297 L964,286 C962.5,285 961,283.5 960,281.5 C958.5,280 958.5,277 959.5,276.5 C959,275 958.5,273 958.5,270 C958.5,262 964.5,256 973,256 Z" fill="#b8b8b8"/>
<line x1="973.0" y1="2" x2="973.0" y2="883" stroke="#a2a2a2" stroke-width="1.1"/>
<line x1="606" y1="579.2" x2="1239" y2="579.2" stroke="#a8a8a8" stroke-width="1.1"/>
<rect x="901.4" y="19.6" width="123.5" height="13.2" fill="#3bcb68" stroke="#1d3b25" stroke-width="1"/>
<circle cx="901.4" cy="19.6" r="1.1" fill="#1d3b25"/><circle cx="963.0" cy="19.6" r="1.1" fill="#1d3b25"/><circle cx="1024.9" cy="19.6" r="1.1" fill="#1d3b25"/><circle cx="901.4" cy="32.8" r="1.1" fill="#1d3b25"/><circle cx="963.0" cy="32.8" r="1.1" fill="#1d3b25"/><circle cx="1024.9" cy="32.8" r="1.1" fill="#1d3b25"/>
<path d="M1053.7,32.6 C1100.3,32.6 1138.1,73.8 1138.1,124.7 C1138.1,172.8 1099.2,211.7 1051.3,211.7 C1003.4,211.7 964.5,172.8 964.5,124.7 L1021.3000000000001,124.7 A32.0,32.0 0 1 0 1053.7,92.7 Z" fill="#3bcb68" stroke="#1d3b25" stroke-width="1"/>
<circle cx="1053.7" cy="32.6" r="1.1" fill="#1d3b25"/><circle cx="1138.1" cy="124.7" r="1.1" fill="#1d3b25"/><circle cx="1051.3" cy="211.7" r="1.1" fill="#1d3b25"/><circle cx="964.5" cy="124.7" r="1.1" fill="#1d3b25"/><circle cx="1021.3" cy="124.7" r="1.1" fill="#1d3b25"/><circle cx="1053.7" cy="156.7" r="1.1" fill="#1d3b25"/><circle cx="1085.7" cy="124.7" r="1.1" fill="#1d3b25"/><circle cx="1053.7" cy="92.7" r="1.1" fill="#1d3b25"/>
<g fill="#a9c1d9" stroke="none" filter="url(#hb)" opacity="0.95"><rect x="912.9" y="346.9" width="45.2" height="16.0"/><rect x="1001.1" y="350.0" width="45.1" height="15.9"/><path d="M904.2,358.7 L952.9,366.7 L952.9,389.6 C952.9,397.6 959.3,401.6 967.3,402.6 L967.3,426.0 L891.0,418.7 Z" stroke="#a9c1d9" stroke-width="13" stroke-linejoin="round" transform="translate(-1,0.5)"/><path d="M1054.1,361.1 L1005.4,369.6 L1005.4,393.0 C1005.4,401.0 999.0,404.7 991.0,405.7 L991.0,429.7 L1067.3,421.8 Z" stroke="#a9c1d9" stroke-width="11" stroke-linejoin="round" transform="translate(0.5,0.5)"/><rect x="914.6" y="428.0" width="51.1" height="15.7"/><rect x="993.4" y="430.8" width="50.8" height="16.0"/><rect x="917.9" y="448.3" width="45.2" height="16.0"/><rect x="1006.1" y="451.4" width="45.1" height="15.9"/><path d="M909.2,460.1 L957.9,468.1 L957.9,491.0 C957.9,499.0 964.3,503.0 972.3,504.0 L972.3,527.4 L896.0,520.1 Z" stroke="#a9c1d9" stroke-width="13" stroke-linejoin="round" transform="translate(-1,0.5)"/><path d="M1059.1,462.5 L1010.4,471.0 L1010.4,494.4 C1010.4,502.4 1004.0,506.1 996.0,507.1 L996.0,531.1 L1072.3,523.2 Z" stroke="#a9c1d9" stroke-width="11" stroke-linejoin="round" transform="translate(0.5,0.5)"/><rect x="919.6" y="529.4" width="51.1" height="15.7"/><rect x="998.4" y="532.2" width="50.8" height="16.0"/><rect x="668.1" y="600.1" width="92.6" height="19.7"/><rect x="804.3" y="600.1" width="92.8" height="19.7"/><rect x="668.1" y="616.7" width="92.6" height="19.7"/><rect x="804.3" y="616.7" width="92.8" height="19.7"/><rect x="677.8" y="660.1" width="71.8" height="19.2"/><rect x="796.2" y="660.1" width="72.1" height="19.2"/><rect x="677.8" y="675.8" width="71.8" height="19.5"/><rect x="796.2" y="675.8" width="72.1" height="19.5"/><rect x="673.2" y="711.5" width="64.9" height="19.3"/><rect x="785.7" y="711.5" width="64.8" height="19.3"/><rect x="673.2" y="727.5" width="64.9" height="19.4"/><rect x="785.7" y="727.5" width="64.8" height="19.4"/><rect x="926.7" y="594.8" width="92.0" height="10.9"/><rect x="1065.4" y="596.1" width="92.1" height="10.9"/><rect x="926.7" y="622.5" width="92.0" height="10.9"/><rect x="1065.4" y="622.5" width="92.1" height="10.9"/><rect x="940.0" y="694.1" width="71.2" height="10.9"/><rect x="1058.5" y="694.1" width="71.2" height="10.9"/><rect x="940.0" y="720.5" width="71.2" height="10.9"/><rect x="1058.5" y="720.5" width="71.2" height="10.9"/><rect x="935.3" y="780.1" width="64.6" height="10.9"/><rect x="1048.0" y="780.1" width="64.5" height="10.9"/><rect x="935.3" y="806.5" width="64.6" height="10.9"/><rect x="1048.0" y="806.5" width="64.5" height="10.9"/></g>
<g stroke="#7f9dbb" stroke-width="1.4" fill="none"><line x1="954.1" y1="355.0" x2="1004.6" y2="357.0"/><line x1="954.6" y1="393.3" x2="1004.6" y2="394.3"/><line x1="961.7" y1="435.7" x2="996.9" y2="437.3"/><line x1="959.1" y1="456.4" x2="1009.6" y2="458.4"/><line x1="959.6" y1="494.7" x2="1009.6" y2="495.7"/><line x1="966.7" y1="537.1" x2="1001.9" y2="538.7"/><line x1="756.2" y1="609.5" x2="808.3" y2="609.5"/><line x1="756.2" y1="626.0" x2="808.3" y2="626.0"/><line x1="745.1" y1="669.2" x2="800.2" y2="669.2"/><line x1="745.1" y1="685.0" x2="800.2" y2="685.0"/><line x1="733.6" y1="720.6" x2="789.7" y2="720.6"/><line x1="733.6" y1="736.7" x2="789.7" y2="736.7"/><line x1="1015.7" y1="599.3" x2="1068.4" y2="600.6"/><line x1="1015.7" y1="627.0" x2="1068.4" y2="627.0"/><line x1="1008.2" y1="698.6" x2="1061.5" y2="698.6"/><line x1="1008.2" y1="725.0" x2="1061.5" y2="725.0"/><line x1="996.9" y1="784.6" x2="1051.0" y2="784.6"/><line x1="996.9" y1="811.0" x2="1051.0" y2="811.0"/></g>
<g fill="#ffffff" stroke="#2a2f36" stroke-width="1"><rect x="916.4" y="351.4" width="37.7" height="6.0"/><rect x="1004.6" y="354.5" width="37.6" height="5.9"/><path d="M904.2,358.7 L952.9,366.7 L952.9,389.6 C952.9,397.6 959.3,401.6 967.3,402.6 L967.3,426.0 L891.0,418.7 Z"/><path d="M1054.1,361.1 L1005.4,369.6 L1005.4,393.0 C1005.4,401.0 999.0,404.7 991.0,405.7 L991.0,429.7 L1067.3,421.8 Z"/><rect x="918.1" y="432.5" width="43.6" height="5.7"/><rect x="996.9" y="435.3" width="43.3" height="6.0"/><rect x="921.4" y="452.8" width="37.7" height="6.0"/><rect x="1009.6" y="455.9" width="37.6" height="5.9"/><path d="M909.2,460.1 L957.9,468.1 L957.9,491.0 C957.9,499.0 964.3,503.0 972.3,504.0 L972.3,527.4 L896.0,520.1 Z"/><path d="M1059.1,462.5 L1010.4,471.0 L1010.4,494.4 C1010.4,502.4 1004.0,506.1 996.0,507.1 L996.0,531.1 L1072.3,523.2 Z"/><rect x="923.1" y="533.9" width="43.6" height="5.7"/><rect x="1001.9" y="536.7" width="43.3" height="6.0"/><rect x="672.1" y="605.1" width="84.1" height="8.7"/><rect x="808.3" y="605.1" width="84.3" height="8.7"/><rect x="672.1" y="621.7" width="84.1" height="8.7"/><rect x="808.3" y="621.7" width="84.3" height="8.7"/><rect x="681.8" y="665.1" width="63.3" height="8.2"/><rect x="800.2" y="665.1" width="63.6" height="8.2"/><rect x="681.8" y="680.8" width="63.3" height="8.5"/><rect x="800.2" y="680.8" width="63.6" height="8.5"/><rect x="677.2" y="716.5" width="56.4" height="8.3"/><rect x="789.7" y="716.5" width="56.3" height="8.3"/><rect x="677.2" y="732.5" width="56.4" height="8.4"/><rect x="789.7" y="732.5" width="56.3" height="8.4"/></g>
<g stroke="#9c403b" stroke-width="0.8" fill="#6e2a27"><line x1="912.7" y1="372.3" x2="952.9" y2="378.2"/><circle cx="912.7" cy="372.3" r="1.1"/><circle cx="952.9" cy="378.2" r="1.1"/><line x1="910.2" y1="384.8" x2="952.9" y2="389.9"/><circle cx="910.2" cy="384.8" r="1.1"/><circle cx="952.9" cy="389.9" r="1.1"/><line x1="907.5" y1="396.9" x2="967.3" y2="404.8"/><circle cx="907.5" cy="396.9" r="1.1"/><circle cx="967.3" cy="404.8" r="1.1"/><line x1="904.2" y1="410.4" x2="967.3" y2="416.7"/><circle cx="904.2" cy="410.4" r="1.1"/><circle cx="967.3" cy="416.7" r="1.1"/><line x1="1005.4" y1="381.1" x2="1045.8" y2="375.2"/><circle cx="1005.4" cy="381.1" r="1.1"/><circle cx="1045.8" cy="375.2" r="1.1"/><line x1="1005.4" y1="393.3" x2="1048.1" y2="387.9"/><circle cx="1005.4" cy="393.3" r="1.1"/><circle cx="1048.1" cy="387.9" r="1.1"/><line x1="991.0" y1="407.9" x2="1050.8" y2="399.7"/><circle cx="991.0" cy="407.9" r="1.1"/><circle cx="1050.8" cy="399.7" r="1.1"/><line x1="991.0" y1="419.7" x2="1054.1" y2="413.3"/><circle cx="991.0" cy="419.7" r="1.1"/><circle cx="1054.1" cy="413.3" r="1.1"/><line x1="917.7" y1="473.7" x2="957.9" y2="479.6"/><circle cx="917.7" cy="473.7" r="1.1"/><circle cx="957.9" cy="479.6" r="1.1"/><line x1="915.2" y1="486.2" x2="957.9" y2="491.3"/><circle cx="915.2" cy="486.2" r="1.1"/><circle cx="957.9" cy="491.3" r="1.1"/><line x1="912.5" y1="498.3" x2="972.3" y2="506.2"/><circle cx="912.5" cy="498.3" r="1.1"/><circle cx="972.3" cy="506.2" r="1.1"/><line x1="909.2" y1="511.8" x2="972.3" y2="518.1"/><circle cx="909.2" cy="511.8" r="1.1"/><circle cx="972.3" cy="518.1" r="1.1"/><line x1="1010.4" y1="482.5" x2="1050.8" y2="476.6"/><circle cx="1010.4" cy="482.5" r="1.1"/><circle cx="1050.8" cy="476.6" r="1.1"/><line x1="1010.4" y1="494.7" x2="1053.1" y2="489.3"/><circle cx="1010.4" cy="494.7" r="1.1"/><circle cx="1053.1" cy="489.3" r="1.1"/><line x1="996.0" y1="509.3" x2="1055.8" y2="501.1"/><circle cx="996.0" cy="509.3" r="1.1"/><circle cx="1055.8" cy="501.1" r="1.1"/><line x1="996.0" y1="521.1" x2="1059.1" y2="514.7"/><circle cx="996.0" cy="521.1" r="1.1"/><circle cx="1059.1" cy="514.7" r="1.1"/></g>
<circle cx="916.4" cy="351.4" r="1.35" fill="#20242a"/><circle cx="954.1" cy="351.4" r="1.35" fill="#20242a"/><circle cx="916.4" cy="357.4" r="1.35" fill="#20242a"/><circle cx="954.1" cy="357.4" r="1.35" fill="#20242a"/><circle cx="1004.6" cy="354.5" r="1.35" fill="#20242a"/><circle cx="1042.2" cy="354.5" r="1.35" fill="#20242a"/><circle cx="1004.6" cy="360.4" r="1.35" fill="#20242a"/><circle cx="1042.2" cy="360.4" r="1.35" fill="#20242a"/><circle cx="904.2" cy="358.7" r="1.35" fill="#20242a"/><circle cx="952.9" cy="366.7" r="1.35" fill="#20242a"/><circle cx="952.9" cy="389.6" r="1.35" fill="#20242a"/><circle cx="967.3" cy="402.6" r="1.35" fill="#20242a"/><circle cx="967.3" cy="426.0" r="1.35" fill="#20242a"/><circle cx="891.0" cy="418.7" r="1.35" fill="#20242a"/><circle cx="1054.1" cy="361.1" r="1.35" fill="#20242a"/><circle cx="1005.4" cy="369.6" r="1.35" fill="#20242a"/><circle cx="1005.4" cy="393.0" r="1.35" fill="#20242a"/><circle cx="991.0" cy="405.7" r="1.35" fill="#20242a"/><circle cx="991.0" cy="429.7" r="1.35" fill="#20242a"/><circle cx="1067.3" cy="421.8" r="1.35" fill="#20242a"/><circle cx="918.1" cy="432.5" r="1.35" fill="#20242a"/><circle cx="961.7" cy="432.5" r="1.35" fill="#20242a"/><circle cx="918.1" cy="438.2" r="1.35" fill="#20242a"/><circle cx="961.7" cy="438.2" r="1.35" fill="#20242a"/><circle cx="996.9" cy="435.3" r="1.35" fill="#20242a"/><circle cx="1040.2" cy="435.3" r="1.35" fill="#20242a"/><circle cx="996.9" cy="441.3" r="1.35" fill="#20242a"/><circle cx="1040.2" cy="441.3" r="1.35" fill="#20242a"/><circle cx="921.4" cy="452.8" r="1.35" fill="#20242a"/><circle cx="959.1" cy="452.8" r="1.35" fill="#20242a"/><circle cx="921.4" cy="458.8" r="1.35" fill="#20242a"/><circle cx="959.1" cy="458.8" r="1.35" fill="#20242a"/><circle cx="1009.6" cy="455.9" r="1.35" fill="#20242a"/><circle cx="1047.2" cy="455.9" r="1.35" fill="#20242a"/><circle cx="1009.6" cy="461.8" r="1.35" fill="#20242a"/><circle cx="1047.2" cy="461.8" r="1.35" fill="#20242a"/><circle cx="909.2" cy="460.1" r="1.35" fill="#20242a"/><circle cx="957.9" cy="468.1" r="1.35" fill="#20242a"/><circle cx="957.9" cy="491.0" r="1.35" fill="#20242a"/><circle cx="972.3" cy="504.0" r="1.35" fill="#20242a"/><circle cx="972.3" cy="527.4" r="1.35" fill="#20242a"/><circle cx="896.0" cy="520.1" r="1.35" fill="#20242a"/><circle cx="1059.1" cy="462.5" r="1.35" fill="#20242a"/><circle cx="1010.4" cy="471.0" r="1.35" fill="#20242a"/><circle cx="1010.4" cy="494.4" r="1.35" fill="#20242a"/><circle cx="996.0" cy="507.1" r="1.35" fill="#20242a"/><circle cx="996.0" cy="531.1" r="1.35" fill="#20242a"/><circle cx="1072.3" cy="523.2" r="1.35" fill="#20242a"/><circle cx="923.1" cy="533.9" r="1.35" fill="#20242a"/><circle cx="966.7" cy="533.9" r="1.35" fill="#20242a"/><circle cx="923.1" cy="539.6" r="1.35" fill="#20242a"/><circle cx="966.7" cy="539.6" r="1.35" fill="#20242a"/><circle cx="1001.9" cy="536.7" r="1.35" fill="#20242a"/><circle cx="1045.2" cy="536.7" r="1.35" fill="#20242a"/><circle cx="1001.9" cy="542.7" r="1.35" fill="#20242a"/><circle cx="1045.2" cy="542.7" r="1.35" fill="#20242a"/><circle cx="672.1" cy="605.1" r="1.35" fill="#20242a"/><circle cx="756.2" cy="605.1" r="1.35" fill="#20242a"/><circle cx="672.1" cy="613.8" r="1.35" fill="#20242a"/><circle cx="756.2" cy="613.8" r="1.35" fill="#20242a"/><circle cx="808.3" cy="605.1" r="1.35" fill="#20242a"/><circle cx="892.6" cy="605.1" r="1.35" fill="#20242a"/><circle cx="808.3" cy="613.8" r="1.35" fill="#20242a"/><circle cx="892.6" cy="613.8" r="1.35" fill="#20242a"/><circle cx="672.1" cy="621.7" r="1.35" fill="#20242a"/><circle cx="756.2" cy="621.7" r="1.35" fill="#20242a"/><circle cx="672.1" cy="630.4" r="1.35" fill="#20242a"/><circle cx="756.2" cy="630.4" r="1.35" fill="#20242a"/><circle cx="808.3" cy="621.7" r="1.35" fill="#20242a"/><circle cx="892.6" cy="621.7" r="1.35" fill="#20242a"/><circle cx="808.3" cy="630.4" r="1.35" fill="#20242a"/><circle cx="892.6" cy="630.4" r="1.35" fill="#20242a"/><circle cx="681.8" cy="665.1" r="1.35" fill="#20242a"/><circle cx="745.1" cy="665.1" r="1.35" fill="#20242a"/><circle cx="681.8" cy="673.3" r="1.35" fill="#20242a"/><circle cx="745.1" cy="673.3" r="1.35" fill="#20242a"/><circle cx="800.2" cy="665.1" r="1.35" fill="#20242a"/><circle cx="863.8" cy="665.1" r="1.35" fill="#20242a"/><circle cx="800.2" cy="673.3" r="1.35" fill="#20242a"/><circle cx="863.8" cy="673.3" r="1.35" fill="#20242a"/><circle cx="681.8" cy="680.8" r="1.35" fill="#20242a"/><circle cx="745.1" cy="680.8" r="1.35" fill="#20242a"/><circle cx="681.8" cy="689.3" r="1.35" fill="#20242a"/><circle cx="745.1" cy="689.3" r="1.35" fill="#20242a"/><circle cx="800.2" cy="680.8" r="1.35" fill="#20242a"/><circle cx="863.8" cy="680.8" r="1.35" fill="#20242a"/><circle cx="800.2" cy="689.3" r="1.35" fill="#20242a"/><circle cx="863.8" cy="689.3" r="1.35" fill="#20242a"/><circle cx="677.2" cy="716.5" r="1.35" fill="#20242a"/><circle cx="733.6" cy="716.5" r="1.35" fill="#20242a"/><circle cx="677.2" cy="724.8" r="1.35" fill="#20242a"/><circle cx="733.6" cy="724.8" r="1.35" fill="#20242a"/><circle cx="789.7" cy="716.5" r="1.35" fill="#20242a"/><circle cx="846.0" cy="716.5" r="1.35" fill="#20242a"/><circle cx="789.7" cy="724.8" r="1.35" fill="#20242a"/><circle cx="846.0" cy="724.8" r="1.35" fill="#20242a"/><circle cx="677.2" cy="732.5" r="1.35" fill="#20242a"/><circle cx="733.6" cy="732.5" r="1.35" fill="#20242a"/><circle cx="677.2" cy="740.9" r="1.35" fill="#20242a"/><circle cx="733.6" cy="740.9" r="1.35" fill="#20242a"/><circle cx="789.7" cy="732.5" r="1.35" fill="#20242a"/><circle cx="846.0" cy="732.5" r="1.35" fill="#20242a"/><circle cx="789.7" cy="740.9" r="1.35" fill="#20242a"/><circle cx="846.0" cy="740.9" r="1.35" fill="#20242a"/>
<g fill="#ffffff" stroke="#1c1c1c" stroke-width="1" stroke-linejoin="round"><path d="M910.5,548.8 C911.2,554.0 917.0,554.0 917.8,548.8 C918.5,554.0 924.3,554.0 925.0,548.8 C925.7,554.0 931.5,554.0 932.2,548.8 C933.0,554.0 938.8,554.0 939.5,548.8 C940.2,554.0 946.0,554.0 946.8,548.8 C947.5,554.0 953.3,554.0 954.0,548.8 C954.7,554.0 960.5,554.0 961.2,548.8 C962.0,554.0 967.8,554.0 968.5,548.8 Z"/><path d="M913.6,561.0 C914.3,566.2 920.1,566.2 920.8,561.0 C921.6,566.2 927.4,566.2 928.1,561.0 C928.8,566.2 934.6,566.2 935.3,561.0 C936.0,566.2 941.8,566.2 942.5,561.0 C943.3,566.2 949.1,566.2 949.8,561.0 C950.5,566.2 956.3,566.2 957.0,561.0 C957.7,566.2 963.5,566.2 964.3,561.0 C965.0,566.2 970.8,566.2 971.5,561.0 Z"/><path d="M995.3,550.6 C996.0,555.8 1001.8,555.8 1002.5,550.6 C1003.3,555.8 1009.1,555.8 1009.8,550.6 C1010.5,555.8 1016.3,555.8 1017.0,550.6 C1017.7,555.8 1023.5,555.8 1024.2,550.6 C1025.0,555.8 1030.8,555.8 1031.5,550.6 C1032.2,555.8 1038.0,555.8 1038.7,550.6 C1039.4,555.8 1045.2,555.8 1046.0,550.6 C1046.7,555.8 1052.5,555.8 1053.2,550.6 Z"/><path d="M998.6,559.4 C999.3,564.6 1005.1,564.6 1005.9,559.4 C1006.6,564.6 1012.4,564.6 1013.1,559.4 C1013.8,564.6 1019.6,564.6 1020.4,559.4 C1021.1,564.6 1026.9,564.6 1027.6,559.4 C1028.3,564.6 1034.1,564.6 1034.8,559.4 C1035.6,564.6 1041.4,564.6 1042.1,559.4 C1042.8,564.6 1048.6,564.6 1049.3,559.4 C1050.1,564.6 1055.9,564.6 1056.6,559.4 Z"/><path d="M929.7,598.3 C930.8,603.5 939.4,603.5 940.5,598.3 C941.5,603.5 950.1,603.5 951.2,598.3 C952.3,603.5 960.9,603.5 962.0,598.3 C963.0,603.5 971.6,603.5 972.7,598.3 C973.8,603.5 982.4,603.5 983.5,598.3 C984.5,603.5 993.1,603.5 994.2,598.3 C995.3,603.5 1003.9,603.5 1005.0,598.3 C1006.0,603.5 1014.6,603.5 1015.7,598.3 Z"/><path d="M1068.4,599.6 C1069.5,604.8 1078.1,604.8 1079.2,599.6 C1080.2,604.8 1088.8,604.8 1089.9,599.6 C1091.0,604.8 1099.6,604.8 1100.7,599.6 C1101.8,604.8 1110.4,604.8 1111.5,599.6 C1112.5,604.8 1121.1,604.8 1122.2,599.6 C1123.3,604.8 1131.9,604.8 1133.0,599.6 C1134.1,604.8 1142.7,604.8 1143.7,599.6 C1144.8,604.8 1153.4,604.8 1154.5,599.6 Z"/><path d="M929.7,626.0 C930.8,631.2 939.4,631.2 940.5,626.0 C941.5,631.2 950.1,631.2 951.2,626.0 C952.3,631.2 960.9,631.2 962.0,626.0 C963.0,631.2 971.6,631.2 972.7,626.0 C973.8,631.2 982.4,631.2 983.5,626.0 C984.5,631.2 993.1,631.2 994.2,626.0 C995.3,631.2 1003.9,631.2 1005.0,626.0 C1006.0,631.2 1014.6,631.2 1015.7,626.0 Z"/><path d="M1068.4,626.0 C1069.5,631.2 1078.1,631.2 1079.2,626.0 C1080.2,631.2 1088.8,631.2 1089.9,626.0 C1091.0,631.2 1099.6,631.2 1100.7,626.0 C1101.8,631.2 1110.4,631.2 1111.5,626.0 C1112.5,631.2 1121.1,631.2 1122.2,626.0 C1123.3,631.2 1131.9,631.2 1133.0,626.0 C1134.1,631.2 1142.7,631.2 1143.7,626.0 C1144.8,631.2 1153.4,631.2 1154.5,626.0 Z"/><path d="M943.0,697.6 C943.8,702.8 950.3,702.8 951.1,697.6 C952.0,702.8 958.5,702.8 959.3,697.6 C960.1,702.8 966.6,702.8 967.4,697.6 C968.3,702.8 974.8,702.8 975.6,697.6 C976.4,702.8 982.9,702.8 983.8,697.6 C984.6,702.8 991.1,702.8 991.9,697.6 C992.7,702.8 999.2,702.8 1000.1,697.6 C1000.9,702.8 1007.4,702.8 1008.2,697.6 Z"/><path d="M1061.5,697.6 C1062.3,702.8 1068.8,702.8 1069.7,697.6 C1070.5,702.8 1077.0,702.8 1077.8,697.6 C1078.6,702.8 1085.1,702.8 1086.0,697.6 C1086.8,702.8 1093.3,702.8 1094.1,697.6 C1094.9,702.8 1101.4,702.8 1102.2,697.6 C1103.1,702.8 1109.6,702.8 1110.4,697.6 C1111.2,702.8 1117.7,702.8 1118.6,697.6 C1119.4,702.8 1125.9,702.8 1126.7,697.6 Z"/><path d="M943.0,724.0 C943.8,729.2 950.3,729.2 951.1,724.0 C952.0,729.2 958.5,729.2 959.3,724.0 C960.1,729.2 966.6,729.2 967.4,724.0 C968.3,729.2 974.8,729.2 975.6,724.0 C976.4,729.2 982.9,729.2 983.8,724.0 C984.6,729.2 991.1,729.2 991.9,724.0 C992.7,729.2 999.2,729.2 1000.1,724.0 C1000.9,729.2 1007.4,729.2 1008.2,724.0 Z"/><path d="M1061.5,724.0 C1062.3,729.2 1068.8,729.2 1069.7,724.0 C1070.5,729.2 1077.0,729.2 1077.8,724.0 C1078.6,729.2 1085.1,729.2 1086.0,724.0 C1086.8,729.2 1093.3,729.2 1094.1,724.0 C1094.9,729.2 1101.4,729.2 1102.2,724.0 C1103.1,729.2 1109.6,729.2 1110.4,724.0 C1111.2,729.2 1117.7,729.2 1118.6,724.0 C1119.4,729.2 1125.9,729.2 1126.7,724.0 Z"/><path d="M938.3,783.6 C939.0,788.8 944.9,788.8 945.6,783.6 C946.4,788.8 952.2,788.8 953.0,783.6 C953.7,788.8 959.5,788.8 960.3,783.6 C961.0,788.8 966.9,788.8 967.6,783.6 C968.3,788.8 974.2,788.8 974.9,783.6 C975.7,788.8 981.5,788.8 982.2,783.6 C983.0,788.8 988.8,788.8 989.6,783.6 C990.3,788.8 996.2,788.8 996.9,783.6 Z"/><path d="M1051.0,783.6 C1051.7,788.8 1057.6,788.8 1058.3,783.6 C1059.0,788.8 1064.9,788.8 1065.6,783.6 C1066.4,788.8 1072.2,788.8 1072.9,783.6 C1073.7,788.8 1079.5,788.8 1080.2,783.6 C1081.0,788.8 1086.8,788.8 1087.6,783.6 C1088.3,788.8 1094.1,788.8 1094.9,783.6 C1095.6,788.8 1101.5,788.8 1102.2,783.6 C1102.9,788.8 1108.8,788.8 1109.5,783.6 Z"/><path d="M938.3,810.0 C939.0,815.2 944.9,815.2 945.6,810.0 C946.4,815.2 952.2,815.2 953.0,810.0 C953.7,815.2 959.5,815.2 960.3,810.0 C961.0,815.2 966.9,815.2 967.6,810.0 C968.3,815.2 974.2,815.2 974.9,810.0 C975.7,815.2 981.5,815.2 982.2,810.0 C983.0,815.2 988.8,815.2 989.6,810.0 C990.3,815.2 996.2,815.2 996.9,810.0 Z"/><path d="M1051.0,810.0 C1051.7,815.2 1057.6,815.2 1058.3,810.0 C1059.0,815.2 1064.9,815.2 1065.6,810.0 C1066.4,815.2 1072.2,815.2 1072.9,810.0 C1073.7,815.2 1079.5,815.2 1080.2,810.0 C1081.0,815.2 1086.8,815.2 1087.6,810.0 C1088.3,815.2 1094.1,815.2 1094.9,810.0 C1095.6,815.2 1101.5,815.2 1102.2,810.0 C1102.9,815.2 1108.8,815.2 1109.5,810.0 Z"/></g>
<circle cx="910.5" cy="548.8" r="1.15" fill="#151515"/><circle cx="914.1" cy="552.7" r="1.15" fill="#151515"/><circle cx="917.8" cy="548.8" r="1.15" fill="#151515"/><circle cx="921.4" cy="552.7" r="1.15" fill="#151515"/><circle cx="925.0" cy="548.8" r="1.15" fill="#151515"/><circle cx="928.6" cy="552.7" r="1.15" fill="#151515"/><circle cx="932.2" cy="548.8" r="1.15" fill="#151515"/><circle cx="935.9" cy="552.7" r="1.15" fill="#151515"/><circle cx="939.5" cy="548.8" r="1.15" fill="#151515"/><circle cx="943.1" cy="552.7" r="1.15" fill="#151515"/><circle cx="946.8" cy="548.8" r="1.15" fill="#151515"/><circle cx="950.4" cy="552.7" r="1.15" fill="#151515"/><circle cx="954.0" cy="548.8" r="1.15" fill="#151515"/><circle cx="957.6" cy="552.7" r="1.15" fill="#151515"/><circle cx="961.2" cy="548.8" r="1.15" fill="#151515"/><circle cx="964.9" cy="552.7" r="1.15" fill="#151515"/><circle cx="968.5" cy="548.8" r="1.15" fill="#151515"/><circle cx="913.6" cy="561.0" r="1.15" fill="#151515"/><circle cx="917.2" cy="564.9" r="1.15" fill="#151515"/><circle cx="920.8" cy="561.0" r="1.15" fill="#151515"/><circle cx="924.5" cy="564.9" r="1.15" fill="#151515"/><circle cx="928.1" cy="561.0" r="1.15" fill="#151515"/><circle cx="931.7" cy="564.9" r="1.15" fill="#151515"/><circle cx="935.3" cy="561.0" r="1.15" fill="#151515"/><circle cx="938.9" cy="564.9" r="1.15" fill="#151515"/><circle cx="942.5" cy="561.0" r="1.15" fill="#151515"/><circle cx="946.2" cy="564.9" r="1.15" fill="#151515"/><circle cx="949.8" cy="561.0" r="1.15" fill="#151515"/><circle cx="953.4" cy="564.9" r="1.15" fill="#151515"/><circle cx="957.0" cy="561.0" r="1.15" fill="#151515"/><circle cx="960.6" cy="564.9" r="1.15" fill="#151515"/><circle cx="964.3" cy="561.0" r="1.15" fill="#151515"/><circle cx="967.9" cy="564.9" r="1.15" fill="#151515"/><circle cx="971.5" cy="561.0" r="1.15" fill="#151515"/><circle cx="995.3" cy="550.6" r="1.15" fill="#151515"/><circle cx="998.9" cy="554.5" r="1.15" fill="#151515"/><circle cx="1002.5" cy="550.6" r="1.15" fill="#151515"/><circle cx="1006.2" cy="554.5" r="1.15" fill="#151515"/><circle cx="1009.8" cy="550.6" r="1.15" fill="#151515"/><circle cx="1013.4" cy="554.5" r="1.15" fill="#151515"/><circle cx="1017.0" cy="550.6" r="1.15" fill="#151515"/><circle cx="1020.6" cy="554.5" r="1.15" fill="#151515"/><circle cx="1024.2" cy="550.6" r="1.15" fill="#151515"/><circle cx="1027.9" cy="554.5" r="1.15" fill="#151515"/><circle cx="1031.5" cy="550.6" r="1.15" fill="#151515"/><circle cx="1035.1" cy="554.5" r="1.15" fill="#151515"/><circle cx="1038.7" cy="550.6" r="1.15" fill="#151515"/><circle cx="1042.3" cy="554.5" r="1.15" fill="#151515"/><circle cx="1046.0" cy="550.6" r="1.15" fill="#151515"/><circle cx="1049.6" cy="554.5" r="1.15" fill="#151515"/><circle cx="1053.2" cy="550.6" r="1.15" fill="#151515"/><circle cx="998.6" cy="559.4" r="1.15" fill="#151515"/><circle cx="1002.2" cy="563.3" r="1.15" fill="#151515"/><circle cx="1005.9" cy="559.4" r="1.15" fill="#151515"/><circle cx="1009.5" cy="563.3" r="1.15" fill="#151515"/><circle cx="1013.1" cy="559.4" r="1.15" fill="#151515"/><circle cx="1016.7" cy="563.3" r="1.15" fill="#151515"/><circle cx="1020.4" cy="559.4" r="1.15" fill="#151515"/><circle cx="1024.0" cy="563.3" r="1.15" fill="#151515"/><circle cx="1027.6" cy="559.4" r="1.15" fill="#151515"/><circle cx="1031.2" cy="563.3" r="1.15" fill="#151515"/><circle cx="1034.8" cy="559.4" r="1.15" fill="#151515"/><circle cx="1038.5" cy="563.3" r="1.15" fill="#151515"/><circle cx="1042.1" cy="559.4" r="1.15" fill="#151515"/><circle cx="1045.7" cy="563.3" r="1.15" fill="#151515"/><circle cx="1049.3" cy="559.4" r="1.15" fill="#151515"/><circle cx="1053.0" cy="563.3" r="1.15" fill="#151515"/><circle cx="1056.6" cy="559.4" r="1.15" fill="#151515"/><circle cx="929.7" cy="598.3" r="1.15" fill="#151515"/><circle cx="935.1" cy="602.2" r="1.15" fill="#151515"/><circle cx="940.5" cy="598.3" r="1.15" fill="#151515"/><circle cx="945.8" cy="602.2" r="1.15" fill="#151515"/><circle cx="951.2" cy="598.3" r="1.15" fill="#151515"/><circle cx="956.6" cy="602.2" r="1.15" fill="#151515"/><circle cx="962.0" cy="598.3" r="1.15" fill="#151515"/><circle cx="967.3" cy="602.2" r="1.15" fill="#151515"/><circle cx="972.7" cy="598.3" r="1.15" fill="#151515"/><circle cx="978.1" cy="602.2" r="1.15" fill="#151515"/><circle cx="983.5" cy="598.3" r="1.15" fill="#151515"/><circle cx="988.8" cy="602.2" r="1.15" fill="#151515"/><circle cx="994.2" cy="598.3" r="1.15" fill="#151515"/><circle cx="999.6" cy="602.2" r="1.15" fill="#151515"/><circle cx="1005.0" cy="598.3" r="1.15" fill="#151515"/><circle cx="1010.3" cy="602.2" r="1.15" fill="#151515"/><circle cx="1015.7" cy="598.3" r="1.15" fill="#151515"/><circle cx="1068.4" cy="599.6" r="1.15" fill="#151515"/><circle cx="1073.8" cy="603.5" r="1.15" fill="#151515"/><circle cx="1079.2" cy="599.6" r="1.15" fill="#151515"/><circle cx="1084.5" cy="603.5" r="1.15" fill="#151515"/><circle cx="1089.9" cy="599.6" r="1.15" fill="#151515"/><circle cx="1095.3" cy="603.5" r="1.15" fill="#151515"/><circle cx="1100.7" cy="599.6" r="1.15" fill="#151515"/><circle cx="1106.1" cy="603.5" r="1.15" fill="#151515"/><circle cx="1111.5" cy="599.6" r="1.15" fill="#151515"/><circle cx="1116.8" cy="603.5" r="1.15" fill="#151515"/><circle cx="1122.2" cy="599.6" r="1.15" fill="#151515"/><circle cx="1127.6" cy="603.5" r="1.15" fill="#151515"/><circle cx="1133.0" cy="599.6" r="1.15" fill="#151515"/><circle cx="1138.4" cy="603.5" r="1.15" fill="#151515"/><circle cx="1143.7" cy="599.6" r="1.15" fill="#151515"/><circle cx="1149.1" cy="603.5" r="1.15" fill="#151515"/><circle cx="1154.5" cy="599.6" r="1.15" fill="#151515"/><circle cx="929.7" cy="626.0" r="1.15" fill="#151515"/><circle cx="935.1" cy="629.9" r="1.15" fill="#151515"/><circle cx="940.5" cy="626.0" r="1.15" fill="#151515"/><circle cx="945.8" cy="629.9" r="1.15" fill="#151515"/><circle cx="951.2" cy="626.0" r="1.15" fill="#151515"/><circle cx="956.6" cy="629.9" r="1.15" fill="#151515"/><circle cx="962.0" cy="626.0" r="1.15" fill="#151515"/><circle cx="967.3" cy="629.9" r="1.15" fill="#151515"/><circle cx="972.7" cy="626.0" r="1.15" fill="#151515"/><circle cx="978.1" cy="629.9" r="1.15" fill="#151515"/><circle cx="983.5" cy="626.0" r="1.15" fill="#151515"/><circle cx="988.8" cy="629.9" r="1.15" fill="#151515"/><circle cx="994.2" cy="626.0" r="1.15" fill="#151515"/><circle cx="999.6" cy="629.9" r="1.15" fill="#151515"/><circle cx="1005.0" cy="626.0" r="1.15" fill="#151515"/><circle cx="1010.3" cy="629.9" r="1.15" fill="#151515"/><circle cx="1015.7" cy="626.0" r="1.15" fill="#151515"/><circle cx="1068.4" cy="626.0" r="1.15" fill="#151515"/><circle cx="1073.8" cy="629.9" r="1.15" fill="#151515"/><circle cx="1079.2" cy="626.0" r="1.15" fill="#151515"/><circle cx="1084.5" cy="629.9" r="1.15" fill="#151515"/><circle cx="1089.9" cy="626.0" r="1.15" fill="#151515"/><circle cx="1095.3" cy="629.9" r="1.15" fill="#151515"/><circle cx="1100.7" cy="626.0" r="1.15" fill="#151515"/><circle cx="1106.1" cy="629.9" r="1.15" fill="#151515"/><circle cx="1111.5" cy="626.0" r="1.15" fill="#151515"/><circle cx="1116.8" cy="629.9" r="1.15" fill="#151515"/><circle cx="1122.2" cy="626.0" r="1.15" fill="#151515"/><circle cx="1127.6" cy="629.9" r="1.15" fill="#151515"/><circle cx="1133.0" cy="626.0" r="1.15" fill="#151515"/><circle cx="1138.4" cy="629.9" r="1.15" fill="#151515"/><circle cx="1143.7" cy="626.0" r="1.15" fill="#151515"/><circle cx="1149.1" cy="629.9" r="1.15" fill="#151515"/><circle cx="1154.5" cy="626.0" r="1.15" fill="#151515"/><circle cx="943.0" cy="697.6" r="1.15" fill="#151515"/><circle cx="947.1" cy="701.5" r="1.15" fill="#151515"/><circle cx="951.1" cy="697.6" r="1.15" fill="#151515"/><circle cx="955.2" cy="701.5" r="1.15" fill="#151515"/><circle cx="959.3" cy="697.6" r="1.15" fill="#151515"/><circle cx="963.4" cy="701.5" r="1.15" fill="#151515"/><circle cx="967.5" cy="697.6" r="1.15" fill="#151515"/><circle cx="971.5" cy="701.5" r="1.15" fill="#151515"/><circle cx="975.6" cy="697.6" r="1.15" fill="#151515"/><circle cx="979.7" cy="701.5" r="1.15" fill="#151515"/><circle cx="983.8" cy="697.6" r="1.15" fill="#151515"/><circle cx="987.8" cy="701.5" r="1.15" fill="#151515"/><circle cx="991.9" cy="697.6" r="1.15" fill="#151515"/><circle cx="996.0" cy="701.5" r="1.15" fill="#151515"/><circle cx="1000.1" cy="697.6" r="1.15" fill="#151515"/><circle cx="1004.1" cy="701.5" r="1.15" fill="#151515"/><circle cx="1008.2" cy="697.6" r="1.15" fill="#151515"/><circle cx="1061.5" cy="697.6" r="1.15" fill="#151515"/><circle cx="1065.6" cy="701.5" r="1.15" fill="#151515"/><circle cx="1069.7" cy="697.6" r="1.15" fill="#151515"/><circle cx="1073.7" cy="701.5" r="1.15" fill="#151515"/><circle cx="1077.8" cy="697.6" r="1.15" fill="#151515"/><circle cx="1081.9" cy="701.5" r="1.15" fill="#151515"/><circle cx="1086.0" cy="697.6" r="1.15" fill="#151515"/><circle cx="1090.0" cy="701.5" r="1.15" fill="#151515"/><circle cx="1094.1" cy="697.6" r="1.15" fill="#151515"/><circle cx="1098.2" cy="701.5" r="1.15" fill="#151515"/><circle cx="1102.2" cy="697.6" r="1.15" fill="#151515"/><circle cx="1106.3" cy="701.5" r="1.15" fill="#151515"/><circle cx="1110.4" cy="697.6" r="1.15" fill="#151515"/><circle cx="1114.5" cy="701.5" r="1.15" fill="#151515"/><circle cx="1118.5" cy="697.6" r="1.15" fill="#151515"/><circle cx="1122.6" cy="701.5" r="1.15" fill="#151515"/><circle cx="1126.7" cy="697.6" r="1.15" fill="#151515"/><circle cx="943.0" cy="724.0" r="1.15" fill="#151515"/><circle cx="947.1" cy="727.9" r="1.15" fill="#151515"/><circle cx="951.1" cy="724.0" r="1.15" fill="#151515"/><circle cx="955.2" cy="727.9" r="1.15" fill="#151515"/><circle cx="959.3" cy="724.0" r="1.15" fill="#151515"/><circle cx="963.4" cy="727.9" r="1.15" fill="#151515"/><circle cx="967.5" cy="724.0" r="1.15" fill="#151515"/><circle cx="971.5" cy="727.9" r="1.15" fill="#151515"/><circle cx="975.6" cy="724.0" r="1.15" fill="#151515"/><circle cx="979.7" cy="727.9" r="1.15" fill="#151515"/><circle cx="983.8" cy="724.0" r="1.15" fill="#151515"/><circle cx="987.8" cy="727.9" r="1.15" fill="#151515"/><circle cx="991.9" cy="724.0" r="1.15" fill="#151515"/><circle cx="996.0" cy="727.9" r="1.15" fill="#151515"/><circle cx="1000.1" cy="724.0" r="1.15" fill="#151515"/><circle cx="1004.1" cy="727.9" r="1.15" fill="#151515"/><circle cx="1008.2" cy="724.0" r="1.15" fill="#151515"/><circle cx="1061.5" cy="724.0" r="1.15" fill="#151515"/><circle cx="1065.6" cy="727.9" r="1.15" fill="#151515"/><circle cx="1069.7" cy="724.0" r="1.15" fill="#151515"/><circle cx="1073.7" cy="727.9" r="1.15" fill="#151515"/><circle cx="1077.8" cy="724.0" r="1.15" fill="#151515"/><circle cx="1081.9" cy="727.9" r="1.15" fill="#151515"/><circle cx="1086.0" cy="724.0" r="1.15" fill="#151515"/><circle cx="1090.0" cy="727.9" r="1.15" fill="#151515"/><circle cx="1094.1" cy="724.0" r="1.15" fill="#151515"/><circle cx="1098.2" cy="727.9" r="1.15" fill="#151515"/><circle cx="1102.2" cy="724.0" r="1.15" fill="#151515"/><circle cx="1106.3" cy="727.9" r="1.15" fill="#151515"/><circle cx="1110.4" cy="724.0" r="1.15" fill="#151515"/><circle cx="1114.5" cy="727.9" r="1.15" fill="#151515"/><circle cx="1118.5" cy="724.0" r="1.15" fill="#151515"/><circle cx="1122.6" cy="727.9" r="1.15" fill="#151515"/><circle cx="1126.7" cy="724.0" r="1.15" fill="#151515"/><circle cx="938.3" cy="783.6" r="1.15" fill="#151515"/><circle cx="942.0" cy="787.5" r="1.15" fill="#151515"/><circle cx="945.6" cy="783.6" r="1.15" fill="#151515"/><circle cx="949.3" cy="787.5" r="1.15" fill="#151515"/><circle cx="952.9" cy="783.6" r="1.15" fill="#151515"/><circle cx="956.6" cy="787.5" r="1.15" fill="#151515"/><circle cx="960.3" cy="783.6" r="1.15" fill="#151515"/><circle cx="963.9" cy="787.5" r="1.15" fill="#151515"/><circle cx="967.6" cy="783.6" r="1.15" fill="#151515"/><circle cx="971.3" cy="787.5" r="1.15" fill="#151515"/><circle cx="974.9" cy="783.6" r="1.15" fill="#151515"/><circle cx="978.6" cy="787.5" r="1.15" fill="#151515"/><circle cx="982.2" cy="783.6" r="1.15" fill="#151515"/><circle cx="985.9" cy="787.5" r="1.15" fill="#151515"/><circle cx="989.6" cy="783.6" r="1.15" fill="#151515"/><circle cx="993.2" cy="787.5" r="1.15" fill="#151515"/><circle cx="996.9" cy="783.6" r="1.15" fill="#151515"/><circle cx="1051.0" cy="783.6" r="1.15" fill="#151515"/><circle cx="1054.7" cy="787.5" r="1.15" fill="#151515"/><circle cx="1058.3" cy="783.6" r="1.15" fill="#151515"/><circle cx="1062.0" cy="787.5" r="1.15" fill="#151515"/><circle cx="1065.6" cy="783.6" r="1.15" fill="#151515"/><circle cx="1069.3" cy="787.5" r="1.15" fill="#151515"/><circle cx="1072.9" cy="783.6" r="1.15" fill="#151515"/><circle cx="1076.6" cy="787.5" r="1.15" fill="#151515"/><circle cx="1080.2" cy="783.6" r="1.15" fill="#151515"/><circle cx="1083.9" cy="787.5" r="1.15" fill="#151515"/><circle cx="1087.6" cy="783.6" r="1.15" fill="#151515"/><circle cx="1091.2" cy="787.5" r="1.15" fill="#151515"/><circle cx="1094.9" cy="783.6" r="1.15" fill="#151515"/><circle cx="1098.5" cy="787.5" r="1.15" fill="#151515"/><circle cx="1102.2" cy="783.6" r="1.15" fill="#151515"/><circle cx="1105.8" cy="787.5" r="1.15" fill="#151515"/><circle cx="1109.5" cy="783.6" r="1.15" fill="#151515"/><circle cx="938.3" cy="810.0" r="1.15" fill="#151515"/><circle cx="942.0" cy="813.9" r="1.15" fill="#151515"/><circle cx="945.6" cy="810.0" r="1.15" fill="#151515"/><circle cx="949.3" cy="813.9" r="1.15" fill="#151515"/><circle cx="952.9" cy="810.0" r="1.15" fill="#151515"/><circle cx="956.6" cy="813.9" r="1.15" fill="#151515"/><circle cx="960.3" cy="810.0" r="1.15" fill="#151515"/><circle cx="963.9" cy="813.9" r="1.15" fill="#151515"/><circle cx="967.6" cy="810.0" r="1.15" fill="#151515"/><circle cx="971.3" cy="813.9" r="1.15" fill="#151515"/><circle cx="974.9" cy="810.0" r="1.15" fill="#151515"/><circle cx="978.6" cy="813.9" r="1.15" fill="#151515"/><circle cx="982.2" cy="810.0" r="1.15" fill="#151515"/><circle cx="985.9" cy="813.9" r="1.15" fill="#151515"/><circle cx="989.6" cy="810.0" r="1.15" fill="#151515"/><circle cx="993.2" cy="813.9" r="1.15" fill="#151515"/><circle cx="996.9" cy="810.0" r="1.15" fill="#151515"/><circle cx="1051.0" cy="810.0" r="1.15" fill="#151515"/><circle cx="1054.7" cy="813.9" r="1.15" fill="#151515"/><circle cx="1058.3" cy="810.0" r="1.15" fill="#151515"/><circle cx="1062.0" cy="813.9" r="1.15" fill="#151515"/><circle cx="1065.6" cy="810.0" r="1.15" fill="#151515"/><circle cx="1069.3" cy="813.9" r="1.15" fill="#151515"/><circle cx="1072.9" cy="810.0" r="1.15" fill="#151515"/><circle cx="1076.6" cy="813.9" r="1.15" fill="#151515"/><circle cx="1080.2" cy="810.0" r="1.15" fill="#151515"/><circle cx="1083.9" cy="813.9" r="1.15" fill="#151515"/><circle cx="1087.6" cy="810.0" r="1.15" fill="#151515"/><circle cx="1091.2" cy="813.9" r="1.15" fill="#151515"/><circle cx="1094.9" cy="810.0" r="1.15" fill="#151515"/><circle cx="1098.5" cy="813.9" r="1.15" fill="#151515"/><circle cx="1102.2" cy="810.0" r="1.15" fill="#151515"/><circle cx="1105.8" cy="813.9" r="1.15" fill="#151515"/><circle cx="1109.5" cy="810.0" r="1.15" fill="#151515"/>
<g stroke="#4e4e4e" stroke-width="2"><line x1="956.3" y1="326" x2="993.9" y2="326"/><circle cx="956.3" cy="326" r="1.5" fill="#262626" stroke="none"/><circle cx="993.9" cy="326" r="1.5" fill="#262626" stroke="none"/><line x1="961" y1="329.4" x2="989.3" y2="329.4"/><circle cx="961" cy="329.4" r="1.5" fill="#262626" stroke="none"/><circle cx="989.3" cy="329.4" r="1.5" fill="#262626" stroke="none"/><line x1="955.9" y1="333" x2="993.2" y2="333"/><circle cx="955.9" cy="333" r="1.5" fill="#262626" stroke="none"/><circle cx="993.2" cy="333" r="1.5" fill="#262626" stroke="none"/><line x1="960" y1="336.5" x2="988.5" y2="336.5"/><circle cx="960" cy="336.5" r="1.5" fill="#262626" stroke="none"/><circle cx="988.5" cy="336.5" r="1.5" fill="#262626" stroke="none"/><line x1="919" y1="343" x2="956.6" y2="343"/><circle cx="919" cy="343" r="1.5" fill="#262626" stroke="none"/><circle cx="956.6" cy="343" r="1.5" fill="#262626" stroke="none"/><line x1="923.7" y1="346.5" x2="952" y2="346.5"/><circle cx="923.7" cy="346.5" r="1.5" fill="#262626" stroke="none"/><circle cx="952" cy="346.5" r="1.5" fill="#262626" stroke="none"/></g>
<rect x="973.4" y="324.5" width="3.6" height="3" fill="#a03a35"/><rect x="973.4" y="327.9" width="3.6" height="3" fill="#a03a35"/><rect x="973.4" y="331.5" width="3.6" height="3" fill="#a03a35"/><rect x="973.4" y="335.0" width="3.6" height="3" fill="#a03a35"/><rect x="936.3" y="341.5" width="3.2" height="3" fill="#a03a35"/><rect x="936.3" y="345.0" width="3.2" height="3" fill="#a03a35"/>
<rect x="616.8" y="13.4" width="19.6" height="19.4" fill="#d3d3d3" stroke="#b4b4b4" stroke-width="1"/><path d="M617.3,14 L624.3,16 L621.3,25 L617.3,27 Z" fill="#e6dccb" opacity="0.8"/><path d="M621.3,17.2 L623.3,16.2 L634.5999999999999,26.2 L633.9,27 Z" fill="#3a3a3a"/><circle cx="622.5" cy="17" r="1.6" fill="#6e5a4c"/><g transform="translate(617.8,25.5)"><path d="M0,3 C2,0 6,0 8,3 C6,5.6 2,5.6 0,3 Z" fill="#e8e8e8" stroke="#222" stroke-width="0.8"/><circle cx="4" cy="2.9" r="1.9" fill="#111"/><circle cx="4.6" cy="2.3" r="0.6" fill="#fff"/></g><rect x="644.0" y="13.4" width="19.6" height="19.4" fill="#d3d3d3" stroke="#b4b4b4" stroke-width="1"/><path transform="translate(644.05,13.6) scale(1.0)" d="M6,2.5 L8,2.5 C8.6,3.6 11.4,3.6 12,2.5 L14,2.5 L18,6.5 L15.6,9 L14.3,7.8 L14.3,16 L5.7,16 L5.7,7.8 L4.4,9 L2,6.5 Z" fill="#ffffff"/><g transform="translate(645.05,25.5)"><path d="M0,3 C2,0 6,0 8,3 C6,5.6 2,5.6 0,3 Z" fill="#e8e8e8" stroke="#222" stroke-width="0.8"/><circle cx="4" cy="2.9" r="1.9" fill="#111"/><circle cx="4.6" cy="2.3" r="0.6" fill="#fff"/></g><rect x="671.3" y="13.4" width="19.6" height="19.4" fill="#d3d3d3" stroke="#b4b4b4" stroke-width="1"/><circle cx="682.3" cy="22.5" r="7" fill="#4a4642"/><text x="682.3" y="27.2" font-size="13" font-style="italic" font-weight="bold" text-anchor="middle" fill="#f2b818">i</text><g transform="translate(672.3,26)"><path d="M0,3 C2,0 6,0 8,3 C6,5.6 2,5.6 0,3 Z" fill="#e8e8e8" stroke="#222" stroke-width="0.8"/><circle cx="4" cy="2.9" r="1.9" fill="#111"/><circle cx="4.6" cy="2.3" r="0.6" fill="#fff"/></g><rect x="698.5" y="13.4" width="19.6" height="19.4" fill="#d0d0d0" stroke="#8a8a8a" stroke-width="1"/><g transform="translate(698.55,13.3)"><path d="M2.5,7.5 L8,6.5 L9,15 L15.5,14.5 L15,17 L4,17.5 Z" fill="#fafafa" stroke="#c9c9c9" stroke-width="0.4"/><path d="M7.5,4.5 L16.5,3 L17,12.5 L15.5,15 L8,15.5 L6.5,13 Z" fill="url(#orG)"/></g><rect x="725.8" y="13.4" width="19.6" height="19.4" fill="#d0d0d0" stroke="#c0c0c0" stroke-width="1"/><path transform="translate(726.8,13.6) scale(1.0)" d="M6,2.5 L8,2.5 C8.6,3.6 11.4,3.6 12,2.5 L14,2.5 L18,6.5 L15.6,9 L14.3,7.8 L14.3,16 L5.7,16 L5.7,7.8 L4.4,9 L2,6.5 Z" fill="#ffffff"/><g transform="translate(727.3,22)"><path d="M1.2,3.5 V2.2 C1.2,0.2 4.8,0.2 4.8,2.2 V3.5" stroke="#9a9a9a" stroke-width="1.1" fill="none"/><rect x="0" y="3.5" width="6" height="5.5" fill="#9a9a9a"/><rect x="2.4" y="5.2" width="1.2" height="2" fill="#e0e0e0"/></g><g transform="translate(752.55,13)" fill="#909090"><path d="M10,0.5 L15,6 L12,6 L12,9.5 L8,9.5 L8,6 L5,6 Z"/><path d="M1.5,10 L3.5,10 L3.5,14.5 L16.5,14.5 L16.5,10 L18.5,10 L18.5,18 L1.5,18 Z"/><rect x="4.2" y="11.2" width="11.6" height="3" fill="#a2a2a2"/></g>
</svg></body></html>
